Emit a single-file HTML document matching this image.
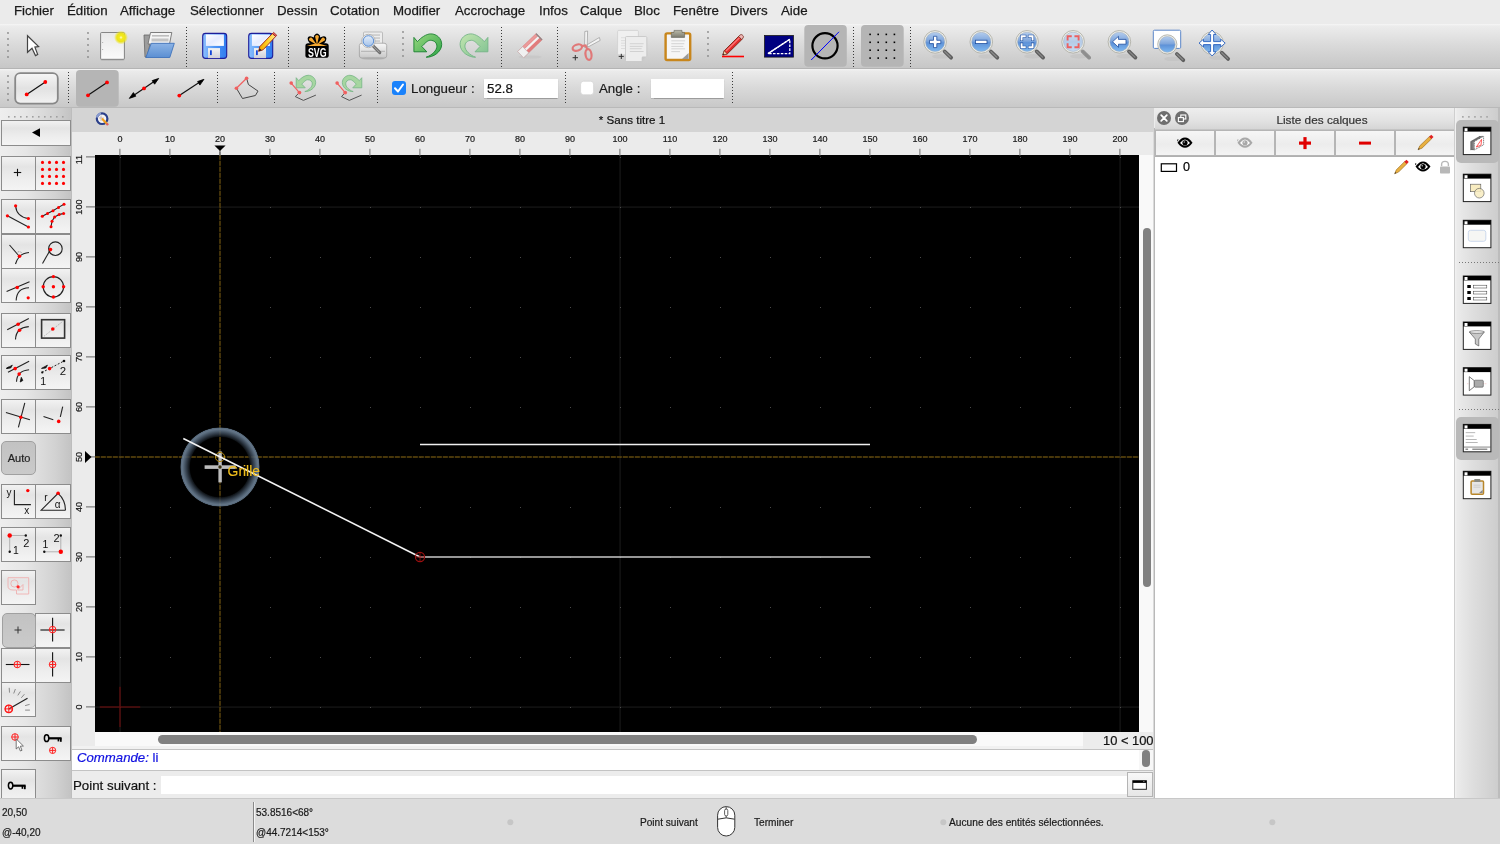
<!DOCTYPE html><html><head><meta charset="utf-8"><style>
html,body{margin:0;padding:0}
body{width:1500px;height:844px;position:relative;overflow:hidden;background:#ececec;font-family:"Liberation Sans",sans-serif}
.t{position:absolute;white-space:nowrap;line-height:normal;-webkit-text-stroke:0.2px currentColor;will-change:transform}
svg{display:block;will-change:transform}
</style></head><body>

<div style="position:absolute;left:0px;top:0px;width:1500px;height:24px;background:#ebebeb"></div>
<div class="t" style="left:13.9px;top:3.36px;font-size:13.3px;color:#1a1a1a;-webkit-text-stroke:0.25px #1a1a1a">Fichier</div>
<div class="t" style="left:66.5px;top:3.36px;font-size:13.3px;color:#1a1a1a;-webkit-text-stroke:0.25px #1a1a1a">Édition</div>
<div class="t" style="left:120.3px;top:3.36px;font-size:13.3px;color:#1a1a1a;-webkit-text-stroke:0.25px #1a1a1a">Affichage</div>
<div class="t" style="left:189.7px;top:3.36px;font-size:13.3px;color:#1a1a1a;-webkit-text-stroke:0.25px #1a1a1a">Sélectionner</div>
<div class="t" style="left:277.1px;top:3.36px;font-size:13.3px;color:#1a1a1a;-webkit-text-stroke:0.25px #1a1a1a">Dessin</div>
<div class="t" style="left:329.7px;top:3.36px;font-size:13.3px;color:#1a1a1a;-webkit-text-stroke:0.25px #1a1a1a">Cotation</div>
<div class="t" style="left:392.5px;top:3.36px;font-size:13.3px;color:#1a1a1a;-webkit-text-stroke:0.25px #1a1a1a">Modifier</div>
<div class="t" style="left:455.0px;top:3.36px;font-size:13.3px;color:#1a1a1a;-webkit-text-stroke:0.25px #1a1a1a">Accrochage</div>
<div class="t" style="left:538.6px;top:3.36px;font-size:13.3px;color:#1a1a1a;-webkit-text-stroke:0.25px #1a1a1a">Infos</div>
<div class="t" style="left:579.6px;top:3.36px;font-size:13.3px;color:#1a1a1a;-webkit-text-stroke:0.25px #1a1a1a">Calque</div>
<div class="t" style="left:633.9px;top:3.36px;font-size:13.3px;color:#1a1a1a;-webkit-text-stroke:0.25px #1a1a1a">Bloc</div>
<div class="t" style="left:672.6px;top:3.36px;font-size:13.3px;color:#1a1a1a;-webkit-text-stroke:0.25px #1a1a1a">Fenêtre</div>
<div class="t" style="left:730.4px;top:3.36px;font-size:13.3px;color:#1a1a1a;-webkit-text-stroke:0.25px #1a1a1a">Divers</div>
<div class="t" style="left:780.6px;top:3.36px;font-size:13.3px;color:#1a1a1a;-webkit-text-stroke:0.25px #1a1a1a">Aide</div>
<div style="position:absolute;left:0px;top:24px;width:1500px;height:44px;background:linear-gradient(#f6f6f6 0px,#ececec 2px,#d9d9d9 22px,#c7c7c7 43.5px);"></div>
<div style="position:absolute;left:0px;top:67.6px;width:1500px;height:1.2px;background:#b4b4b4"></div>
<div style="position:absolute;left:0px;top:68.8px;width:1500px;height:38.2px;background:linear-gradient(#f4f4f4 0px,#ebebeb 2px,#d9d9d9 19px,#c9c9c9 37.5px);"></div>
<div style="position:absolute;left:0px;top:106.7px;width:1500px;height:1.3px;background:#b9b9b9"></div>
<svg style="position:absolute;left:8px;top:33px;overflow:visible" width="1" height="25" viewBox="0 0 1 25"><circle cx="0" cy="0.00" r="0.9" fill="#8a8a8a"/><circle cx="0" cy="6.00" r="0.9" fill="#8a8a8a"/><circle cx="0" cy="12.00" r="0.9" fill="#8a8a8a"/><circle cx="0" cy="18.00" r="0.9" fill="#8a8a8a"/><circle cx="0" cy="24.00" r="0.9" fill="#8a8a8a"/></svg>
<svg style="position:absolute;left:88px;top:33px;overflow:visible" width="1" height="25" viewBox="0 0 1 25"><circle cx="0" cy="0.00" r="0.9" fill="#8a8a8a"/><circle cx="0" cy="6.00" r="0.9" fill="#8a8a8a"/><circle cx="0" cy="12.00" r="0.9" fill="#8a8a8a"/><circle cx="0" cy="18.00" r="0.9" fill="#8a8a8a"/><circle cx="0" cy="24.00" r="0.9" fill="#8a8a8a"/></svg>
<svg style="position:absolute;left:186px;top:27px;overflow:visible" width="1" height="40" viewBox="0 0 1 40"><rect x="0" y="0" width="1" height="1" fill="#3a3a3a"/><rect x="0" y="3" width="1" height="1" fill="#3a3a3a"/><rect x="0" y="6" width="1" height="1" fill="#3a3a3a"/><rect x="0" y="9" width="1" height="1" fill="#3a3a3a"/><rect x="0" y="12" width="1" height="1" fill="#3a3a3a"/><rect x="0" y="15" width="1" height="1" fill="#3a3a3a"/><rect x="0" y="18" width="1" height="1" fill="#3a3a3a"/><rect x="0" y="21" width="1" height="1" fill="#3a3a3a"/><rect x="0" y="24" width="1" height="1" fill="#3a3a3a"/><rect x="0" y="27" width="1" height="1" fill="#3a3a3a"/><rect x="0" y="30" width="1" height="1" fill="#3a3a3a"/><rect x="0" y="33" width="1" height="1" fill="#3a3a3a"/><rect x="0" y="36" width="1" height="1" fill="#3a3a3a"/><rect x="0" y="39" width="1" height="1" fill="#3a3a3a"/></svg>
<svg style="position:absolute;left:288px;top:27px;overflow:visible" width="1" height="40" viewBox="0 0 1 40"><rect x="0" y="0" width="1" height="1" fill="#3a3a3a"/><rect x="0" y="3" width="1" height="1" fill="#3a3a3a"/><rect x="0" y="6" width="1" height="1" fill="#3a3a3a"/><rect x="0" y="9" width="1" height="1" fill="#3a3a3a"/><rect x="0" y="12" width="1" height="1" fill="#3a3a3a"/><rect x="0" y="15" width="1" height="1" fill="#3a3a3a"/><rect x="0" y="18" width="1" height="1" fill="#3a3a3a"/><rect x="0" y="21" width="1" height="1" fill="#3a3a3a"/><rect x="0" y="24" width="1" height="1" fill="#3a3a3a"/><rect x="0" y="27" width="1" height="1" fill="#3a3a3a"/><rect x="0" y="30" width="1" height="1" fill="#3a3a3a"/><rect x="0" y="33" width="1" height="1" fill="#3a3a3a"/><rect x="0" y="36" width="1" height="1" fill="#3a3a3a"/><rect x="0" y="39" width="1" height="1" fill="#3a3a3a"/></svg>
<svg style="position:absolute;left:344px;top:27px;overflow:visible" width="1" height="40" viewBox="0 0 1 40"><rect x="0" y="0" width="1" height="1" fill="#3a3a3a"/><rect x="0" y="3" width="1" height="1" fill="#3a3a3a"/><rect x="0" y="6" width="1" height="1" fill="#3a3a3a"/><rect x="0" y="9" width="1" height="1" fill="#3a3a3a"/><rect x="0" y="12" width="1" height="1" fill="#3a3a3a"/><rect x="0" y="15" width="1" height="1" fill="#3a3a3a"/><rect x="0" y="18" width="1" height="1" fill="#3a3a3a"/><rect x="0" y="21" width="1" height="1" fill="#3a3a3a"/><rect x="0" y="24" width="1" height="1" fill="#3a3a3a"/><rect x="0" y="27" width="1" height="1" fill="#3a3a3a"/><rect x="0" y="30" width="1" height="1" fill="#3a3a3a"/><rect x="0" y="33" width="1" height="1" fill="#3a3a3a"/><rect x="0" y="36" width="1" height="1" fill="#3a3a3a"/><rect x="0" y="39" width="1" height="1" fill="#3a3a3a"/></svg>
<svg style="position:absolute;left:501px;top:27px;overflow:visible" width="1" height="40" viewBox="0 0 1 40"><rect x="0" y="0" width="1" height="1" fill="#3a3a3a"/><rect x="0" y="3" width="1" height="1" fill="#3a3a3a"/><rect x="0" y="6" width="1" height="1" fill="#3a3a3a"/><rect x="0" y="9" width="1" height="1" fill="#3a3a3a"/><rect x="0" y="12" width="1" height="1" fill="#3a3a3a"/><rect x="0" y="15" width="1" height="1" fill="#3a3a3a"/><rect x="0" y="18" width="1" height="1" fill="#3a3a3a"/><rect x="0" y="21" width="1" height="1" fill="#3a3a3a"/><rect x="0" y="24" width="1" height="1" fill="#3a3a3a"/><rect x="0" y="27" width="1" height="1" fill="#3a3a3a"/><rect x="0" y="30" width="1" height="1" fill="#3a3a3a"/><rect x="0" y="33" width="1" height="1" fill="#3a3a3a"/><rect x="0" y="36" width="1" height="1" fill="#3a3a3a"/><rect x="0" y="39" width="1" height="1" fill="#3a3a3a"/></svg>
<svg style="position:absolute;left:557px;top:27px;overflow:visible" width="1" height="40" viewBox="0 0 1 40"><rect x="0" y="0" width="1" height="1" fill="#3a3a3a"/><rect x="0" y="3" width="1" height="1" fill="#3a3a3a"/><rect x="0" y="6" width="1" height="1" fill="#3a3a3a"/><rect x="0" y="9" width="1" height="1" fill="#3a3a3a"/><rect x="0" y="12" width="1" height="1" fill="#3a3a3a"/><rect x="0" y="15" width="1" height="1" fill="#3a3a3a"/><rect x="0" y="18" width="1" height="1" fill="#3a3a3a"/><rect x="0" y="21" width="1" height="1" fill="#3a3a3a"/><rect x="0" y="24" width="1" height="1" fill="#3a3a3a"/><rect x="0" y="27" width="1" height="1" fill="#3a3a3a"/><rect x="0" y="30" width="1" height="1" fill="#3a3a3a"/><rect x="0" y="33" width="1" height="1" fill="#3a3a3a"/><rect x="0" y="36" width="1" height="1" fill="#3a3a3a"/><rect x="0" y="39" width="1" height="1" fill="#3a3a3a"/></svg>
<svg style="position:absolute;left:853px;top:27px;overflow:visible" width="1" height="40" viewBox="0 0 1 40"><rect x="0" y="0" width="1" height="1" fill="#3a3a3a"/><rect x="0" y="3" width="1" height="1" fill="#3a3a3a"/><rect x="0" y="6" width="1" height="1" fill="#3a3a3a"/><rect x="0" y="9" width="1" height="1" fill="#3a3a3a"/><rect x="0" y="12" width="1" height="1" fill="#3a3a3a"/><rect x="0" y="15" width="1" height="1" fill="#3a3a3a"/><rect x="0" y="18" width="1" height="1" fill="#3a3a3a"/><rect x="0" y="21" width="1" height="1" fill="#3a3a3a"/><rect x="0" y="24" width="1" height="1" fill="#3a3a3a"/><rect x="0" y="27" width="1" height="1" fill="#3a3a3a"/><rect x="0" y="30" width="1" height="1" fill="#3a3a3a"/><rect x="0" y="33" width="1" height="1" fill="#3a3a3a"/><rect x="0" y="36" width="1" height="1" fill="#3a3a3a"/><rect x="0" y="39" width="1" height="1" fill="#3a3a3a"/></svg>
<svg style="position:absolute;left:910px;top:27px;overflow:visible" width="1" height="40" viewBox="0 0 1 40"><rect x="0" y="0" width="1" height="1" fill="#3a3a3a"/><rect x="0" y="3" width="1" height="1" fill="#3a3a3a"/><rect x="0" y="6" width="1" height="1" fill="#3a3a3a"/><rect x="0" y="9" width="1" height="1" fill="#3a3a3a"/><rect x="0" y="12" width="1" height="1" fill="#3a3a3a"/><rect x="0" y="15" width="1" height="1" fill="#3a3a3a"/><rect x="0" y="18" width="1" height="1" fill="#3a3a3a"/><rect x="0" y="21" width="1" height="1" fill="#3a3a3a"/><rect x="0" y="24" width="1" height="1" fill="#3a3a3a"/><rect x="0" y="27" width="1" height="1" fill="#3a3a3a"/><rect x="0" y="30" width="1" height="1" fill="#3a3a3a"/><rect x="0" y="33" width="1" height="1" fill="#3a3a3a"/><rect x="0" y="36" width="1" height="1" fill="#3a3a3a"/><rect x="0" y="39" width="1" height="1" fill="#3a3a3a"/></svg>
<svg style="position:absolute;left:403px;top:32px;overflow:visible" width="1" height="26" viewBox="0 0 1 26"><circle cx="0" cy="0.00" r="0.9" fill="#8a8a8a"/><circle cx="0" cy="6.00" r="0.9" fill="#8a8a8a"/><circle cx="0" cy="12.00" r="0.9" fill="#8a8a8a"/><circle cx="0" cy="18.00" r="0.9" fill="#8a8a8a"/><circle cx="0" cy="24.00" r="0.9" fill="#8a8a8a"/></svg>
<svg style="position:absolute;left:708px;top:32px;overflow:visible" width="1" height="26" viewBox="0 0 1 26"><circle cx="0" cy="0.00" r="0.9" fill="#8a8a8a"/><circle cx="0" cy="6.00" r="0.9" fill="#8a8a8a"/><circle cx="0" cy="12.00" r="0.9" fill="#8a8a8a"/><circle cx="0" cy="18.00" r="0.9" fill="#8a8a8a"/><circle cx="0" cy="24.00" r="0.9" fill="#8a8a8a"/></svg>
<svg style="position:absolute;left:8px;top:76px;overflow:visible" width="1" height="25" viewBox="0 0 1 25"><circle cx="0" cy="0.00" r="0.9" fill="#8a8a8a"/><circle cx="0" cy="6.00" r="0.9" fill="#8a8a8a"/><circle cx="0" cy="12.00" r="0.9" fill="#8a8a8a"/><circle cx="0" cy="18.00" r="0.9" fill="#8a8a8a"/><circle cx="0" cy="24.00" r="0.9" fill="#8a8a8a"/></svg>
<svg style="position:absolute;left:68px;top:71.5px;overflow:visible" width="1" height="33.5" viewBox="0 0 1 33.5"><rect x="0" y="0.0" width="1" height="1" fill="#3a3a3a"/><rect x="0" y="3.0" width="1" height="1" fill="#3a3a3a"/><rect x="0" y="6.0" width="1" height="1" fill="#3a3a3a"/><rect x="0" y="9.0" width="1" height="1" fill="#3a3a3a"/><rect x="0" y="12.0" width="1" height="1" fill="#3a3a3a"/><rect x="0" y="15.0" width="1" height="1" fill="#3a3a3a"/><rect x="0" y="18.0" width="1" height="1" fill="#3a3a3a"/><rect x="0" y="21.0" width="1" height="1" fill="#3a3a3a"/><rect x="0" y="24.0" width="1" height="1" fill="#3a3a3a"/><rect x="0" y="27.0" width="1" height="1" fill="#3a3a3a"/><rect x="0" y="30.0" width="1" height="1" fill="#3a3a3a"/></svg>
<svg style="position:absolute;left:217px;top:71.5px;overflow:visible" width="1" height="33.5" viewBox="0 0 1 33.5"><rect x="0" y="0.0" width="1" height="1" fill="#3a3a3a"/><rect x="0" y="3.0" width="1" height="1" fill="#3a3a3a"/><rect x="0" y="6.0" width="1" height="1" fill="#3a3a3a"/><rect x="0" y="9.0" width="1" height="1" fill="#3a3a3a"/><rect x="0" y="12.0" width="1" height="1" fill="#3a3a3a"/><rect x="0" y="15.0" width="1" height="1" fill="#3a3a3a"/><rect x="0" y="18.0" width="1" height="1" fill="#3a3a3a"/><rect x="0" y="21.0" width="1" height="1" fill="#3a3a3a"/><rect x="0" y="24.0" width="1" height="1" fill="#3a3a3a"/><rect x="0" y="27.0" width="1" height="1" fill="#3a3a3a"/><rect x="0" y="30.0" width="1" height="1" fill="#3a3a3a"/></svg>
<svg style="position:absolute;left:274px;top:71.5px;overflow:visible" width="1" height="33.5" viewBox="0 0 1 33.5"><rect x="0" y="0.0" width="1" height="1" fill="#3a3a3a"/><rect x="0" y="3.0" width="1" height="1" fill="#3a3a3a"/><rect x="0" y="6.0" width="1" height="1" fill="#3a3a3a"/><rect x="0" y="9.0" width="1" height="1" fill="#3a3a3a"/><rect x="0" y="12.0" width="1" height="1" fill="#3a3a3a"/><rect x="0" y="15.0" width="1" height="1" fill="#3a3a3a"/><rect x="0" y="18.0" width="1" height="1" fill="#3a3a3a"/><rect x="0" y="21.0" width="1" height="1" fill="#3a3a3a"/><rect x="0" y="24.0" width="1" height="1" fill="#3a3a3a"/><rect x="0" y="27.0" width="1" height="1" fill="#3a3a3a"/><rect x="0" y="30.0" width="1" height="1" fill="#3a3a3a"/></svg>
<svg style="position:absolute;left:377px;top:71.5px;overflow:visible" width="1" height="33.5" viewBox="0 0 1 33.5"><rect x="0" y="0.0" width="1" height="1" fill="#3a3a3a"/><rect x="0" y="3.0" width="1" height="1" fill="#3a3a3a"/><rect x="0" y="6.0" width="1" height="1" fill="#3a3a3a"/><rect x="0" y="9.0" width="1" height="1" fill="#3a3a3a"/><rect x="0" y="12.0" width="1" height="1" fill="#3a3a3a"/><rect x="0" y="15.0" width="1" height="1" fill="#3a3a3a"/><rect x="0" y="18.0" width="1" height="1" fill="#3a3a3a"/><rect x="0" y="21.0" width="1" height="1" fill="#3a3a3a"/><rect x="0" y="24.0" width="1" height="1" fill="#3a3a3a"/><rect x="0" y="27.0" width="1" height="1" fill="#3a3a3a"/><rect x="0" y="30.0" width="1" height="1" fill="#3a3a3a"/></svg>
<svg style="position:absolute;left:565px;top:71.5px;overflow:visible" width="1" height="33.5" viewBox="0 0 1 33.5"><rect x="0" y="0.0" width="1" height="1" fill="#3a3a3a"/><rect x="0" y="3.0" width="1" height="1" fill="#3a3a3a"/><rect x="0" y="6.0" width="1" height="1" fill="#3a3a3a"/><rect x="0" y="9.0" width="1" height="1" fill="#3a3a3a"/><rect x="0" y="12.0" width="1" height="1" fill="#3a3a3a"/><rect x="0" y="15.0" width="1" height="1" fill="#3a3a3a"/><rect x="0" y="18.0" width="1" height="1" fill="#3a3a3a"/><rect x="0" y="21.0" width="1" height="1" fill="#3a3a3a"/><rect x="0" y="24.0" width="1" height="1" fill="#3a3a3a"/><rect x="0" y="27.0" width="1" height="1" fill="#3a3a3a"/><rect x="0" y="30.0" width="1" height="1" fill="#3a3a3a"/></svg>
<svg style="position:absolute;left:732px;top:71.5px;overflow:visible" width="1" height="33.5" viewBox="0 0 1 33.5"><rect x="0" y="0.0" width="1" height="1" fill="#3a3a3a"/><rect x="0" y="3.0" width="1" height="1" fill="#3a3a3a"/><rect x="0" y="6.0" width="1" height="1" fill="#3a3a3a"/><rect x="0" y="9.0" width="1" height="1" fill="#3a3a3a"/><rect x="0" y="12.0" width="1" height="1" fill="#3a3a3a"/><rect x="0" y="15.0" width="1" height="1" fill="#3a3a3a"/><rect x="0" y="18.0" width="1" height="1" fill="#3a3a3a"/><rect x="0" y="21.0" width="1" height="1" fill="#3a3a3a"/><rect x="0" y="24.0" width="1" height="1" fill="#3a3a3a"/><rect x="0" y="27.0" width="1" height="1" fill="#3a3a3a"/><rect x="0" y="30.0" width="1" height="1" fill="#3a3a3a"/></svg>
<div style="position:absolute;left:0px;top:108px;width:70.5px;height:690px;background:linear-gradient(90deg,#eeeeee 0px,#e6e6e6 25px,#d2d2d2 55px,#c4c4c4 70px)"></div>
<div style="position:absolute;left:70.5px;top:108px;width:1.5px;height:690px;background:#bdbdbd"></div>
<svg style="position:absolute;left:0px;top:116px;overflow:visible" width="70" height="2" viewBox="0 0 70 2"><rect x="8" y="0" width="1.6" height="1.6" fill="#a0a0a0"/><rect x="14" y="0" width="1.6" height="1.6" fill="#a0a0a0"/><rect x="20" y="0" width="1.6" height="1.6" fill="#a0a0a0"/><rect x="26" y="0" width="1.6" height="1.6" fill="#a0a0a0"/><rect x="32" y="0" width="1.6" height="1.6" fill="#a0a0a0"/><rect x="38" y="0" width="1.6" height="1.6" fill="#a0a0a0"/><rect x="44" y="0" width="1.6" height="1.6" fill="#a0a0a0"/><rect x="50" y="0" width="1.6" height="1.6" fill="#a0a0a0"/><rect x="56" y="0" width="1.6" height="1.6" fill="#a0a0a0"/><rect x="62" y="0" width="1.6" height="1.6" fill="#a0a0a0"/></svg>
<div style="position:absolute;left:1.1px;top:120.2px;width:69.8px;height:25.6px;box-sizing:border-box;border:1.3px solid #8c8c8c;background:linear-gradient(#f2f2f2 0%,#e4e4e4 30%,#ececec 60%,#f4f4f4 100%)"></div>
<svg style="position:absolute;left:1.1px;top:120.2px;overflow:visible" width="69.8" height="25.6" viewBox="0 0 69.8 25.6"><path d="M31 12.6 L39 8.2 L39 17 Z" fill="#000"/></svg>
<div style="position:absolute;left:72px;top:108px;width:1082px;height:23.5px;background:#d4d4d4"></div>
<div class="t" style="left:332.29999999999995px;width:600px;text-align:center;top:112.70px;font-size:11.6px;color:#111;">* Sans titre 1</div>
<div style="position:absolute;left:72px;top:131.5px;width:1083px;height:23.5px;background:#ebebeb"></div>
<div style="position:absolute;left:72px;top:155px;width:23px;height:591px;background:#ebebeb"></div>
<div style="position:absolute;left:94.5px;top:155px;width:0.8px;height:577px;background:#fafafa"></div>
<div style="position:absolute;left:95px;top:155px;width:1044px;height:576.7px;background:#000"></div>
<div style="position:absolute;left:1139px;top:155px;width:14px;height:577px;background:#f9f9f9"></div>
<div style="position:absolute;left:1143px;top:228px;width:8px;height:359px;background:#808080;border-radius:4px"></div>
<div style="position:absolute;left:95px;top:731.7px;width:988px;height:14.3px;background:#f9f9f9"></div>
<div style="position:absolute;left:72px;top:746px;width:1081px;height:2.5px;background:#f1f1f1"></div>
<div style="position:absolute;left:158px;top:735.2px;width:819px;height:9px;background:#808080;border-radius:4.5px"></div>
<div style="position:absolute;left:1083px;top:731.7px;width:70px;height:17px;background:#ececec"></div>
<div class="t" style="right:346.79999999999995px;top:733.33px;font-size:12.9px;color:#111;">10 &lt; 100</div>
<div style="position:absolute;left:1153px;top:131.5px;width:1.2px;height:666.5px;background:#dadada"></div>
<div style="position:absolute;left:1154.2px;top:128px;width:0.9px;height:670px;background:#b9b9b9"></div>
<div style="position:absolute;left:72px;top:748.5px;width:1081px;height:1.5px;background:#c3c3c3"></div>
<div style="position:absolute;left:72px;top:750px;width:1081px;height:20.4px;background:#fff"></div>
<div class="t" style="left:77.3px;top:749.85px;font-size:13.2px;color:#1010e0;"><i>Commande:</i> li</div>
<div style="position:absolute;left:1139px;top:750px;width:14px;height:20.4px;background:#f7f7f7"></div>
<div style="position:absolute;left:1142px;top:750.4px;width:8px;height:16.4px;background:#808080;border-radius:4px"></div>
<div style="position:absolute;left:72px;top:770.2px;width:1081px;height:1.2px;background:#c3c3c3"></div>
<div style="position:absolute;left:72px;top:771.4px;width:1081px;height:26.6px;background:#ececec"></div>
<div class="t" style="left:73.2px;top:778.36px;font-size:13.3px;color:#111;">Point suivant :</div>
<div style="position:absolute;left:161px;top:775.6px;width:966px;height:18.2px;background:#fff"></div>
<svg style="position:absolute;left:95px;top:155px;overflow:visible" width="1044" height="577" viewBox="0 0 1044 577"><rect x="24.5" y="0" width="1.2" height="577" fill="#181818"/><rect x="524.5" y="0" width="1.2" height="577" fill="#181818"/><rect x="1024.5" y="0" width="1.2" height="577" fill="#181818"/><rect x="0" y="551.5" width="1044" height="1.2" fill="#181818"/><rect x="0" y="51.5" width="1044" height="1.2" fill="#181818"/><rect x="25" y="552" width="1" height="1" fill="#4a4a4a"/><rect x="25" y="502" width="1" height="1" fill="#4a4a4a"/><rect x="25" y="452" width="1" height="1" fill="#4a4a4a"/><rect x="25" y="402" width="1" height="1" fill="#4a4a4a"/><rect x="25" y="352" width="1" height="1" fill="#4a4a4a"/><rect x="25" y="302" width="1" height="1" fill="#4a4a4a"/><rect x="25" y="252" width="1" height="1" fill="#4a4a4a"/><rect x="25" y="202" width="1" height="1" fill="#4a4a4a"/><rect x="25" y="152" width="1" height="1" fill="#4a4a4a"/><rect x="25" y="102" width="1" height="1" fill="#4a4a4a"/><rect x="25" y="52" width="1" height="1" fill="#4a4a4a"/><rect x="25" y="2" width="1" height="1" fill="#4a4a4a"/><rect x="75" y="552" width="1" height="1" fill="#4a4a4a"/><rect x="75" y="502" width="1" height="1" fill="#4a4a4a"/><rect x="75" y="452" width="1" height="1" fill="#4a4a4a"/><rect x="75" y="402" width="1" height="1" fill="#4a4a4a"/><rect x="75" y="352" width="1" height="1" fill="#4a4a4a"/><rect x="75" y="302" width="1" height="1" fill="#4a4a4a"/><rect x="75" y="252" width="1" height="1" fill="#4a4a4a"/><rect x="75" y="202" width="1" height="1" fill="#4a4a4a"/><rect x="75" y="152" width="1" height="1" fill="#4a4a4a"/><rect x="75" y="102" width="1" height="1" fill="#4a4a4a"/><rect x="75" y="52" width="1" height="1" fill="#4a4a4a"/><rect x="75" y="2" width="1" height="1" fill="#4a4a4a"/><rect x="125" y="552" width="1" height="1" fill="#4a4a4a"/><rect x="125" y="502" width="1" height="1" fill="#4a4a4a"/><rect x="125" y="452" width="1" height="1" fill="#4a4a4a"/><rect x="125" y="402" width="1" height="1" fill="#4a4a4a"/><rect x="125" y="352" width="1" height="1" fill="#4a4a4a"/><rect x="125" y="302" width="1" height="1" fill="#4a4a4a"/><rect x="125" y="252" width="1" height="1" fill="#4a4a4a"/><rect x="125" y="202" width="1" height="1" fill="#4a4a4a"/><rect x="125" y="152" width="1" height="1" fill="#4a4a4a"/><rect x="125" y="102" width="1" height="1" fill="#4a4a4a"/><rect x="125" y="52" width="1" height="1" fill="#4a4a4a"/><rect x="125" y="2" width="1" height="1" fill="#4a4a4a"/><rect x="175" y="552" width="1" height="1" fill="#4a4a4a"/><rect x="175" y="502" width="1" height="1" fill="#4a4a4a"/><rect x="175" y="452" width="1" height="1" fill="#4a4a4a"/><rect x="175" y="402" width="1" height="1" fill="#4a4a4a"/><rect x="175" y="352" width="1" height="1" fill="#4a4a4a"/><rect x="175" y="302" width="1" height="1" fill="#4a4a4a"/><rect x="175" y="252" width="1" height="1" fill="#4a4a4a"/><rect x="175" y="202" width="1" height="1" fill="#4a4a4a"/><rect x="175" y="152" width="1" height="1" fill="#4a4a4a"/><rect x="175" y="102" width="1" height="1" fill="#4a4a4a"/><rect x="175" y="52" width="1" height="1" fill="#4a4a4a"/><rect x="175" y="2" width="1" height="1" fill="#4a4a4a"/><rect x="225" y="552" width="1" height="1" fill="#4a4a4a"/><rect x="225" y="502" width="1" height="1" fill="#4a4a4a"/><rect x="225" y="452" width="1" height="1" fill="#4a4a4a"/><rect x="225" y="402" width="1" height="1" fill="#4a4a4a"/><rect x="225" y="352" width="1" height="1" fill="#4a4a4a"/><rect x="225" y="302" width="1" height="1" fill="#4a4a4a"/><rect x="225" y="252" width="1" height="1" fill="#4a4a4a"/><rect x="225" y="202" width="1" height="1" fill="#4a4a4a"/><rect x="225" y="152" width="1" height="1" fill="#4a4a4a"/><rect x="225" y="102" width="1" height="1" fill="#4a4a4a"/><rect x="225" y="52" width="1" height="1" fill="#4a4a4a"/><rect x="225" y="2" width="1" height="1" fill="#4a4a4a"/><rect x="275" y="552" width="1" height="1" fill="#4a4a4a"/><rect x="275" y="502" width="1" height="1" fill="#4a4a4a"/><rect x="275" y="452" width="1" height="1" fill="#4a4a4a"/><rect x="275" y="402" width="1" height="1" fill="#4a4a4a"/><rect x="275" y="352" width="1" height="1" fill="#4a4a4a"/><rect x="275" y="302" width="1" height="1" fill="#4a4a4a"/><rect x="275" y="252" width="1" height="1" fill="#4a4a4a"/><rect x="275" y="202" width="1" height="1" fill="#4a4a4a"/><rect x="275" y="152" width="1" height="1" fill="#4a4a4a"/><rect x="275" y="102" width="1" height="1" fill="#4a4a4a"/><rect x="275" y="52" width="1" height="1" fill="#4a4a4a"/><rect x="275" y="2" width="1" height="1" fill="#4a4a4a"/><rect x="325" y="552" width="1" height="1" fill="#4a4a4a"/><rect x="325" y="502" width="1" height="1" fill="#4a4a4a"/><rect x="325" y="452" width="1" height="1" fill="#4a4a4a"/><rect x="325" y="402" width="1" height="1" fill="#4a4a4a"/><rect x="325" y="352" width="1" height="1" fill="#4a4a4a"/><rect x="325" y="302" width="1" height="1" fill="#4a4a4a"/><rect x="325" y="252" width="1" height="1" fill="#4a4a4a"/><rect x="325" y="202" width="1" height="1" fill="#4a4a4a"/><rect x="325" y="152" width="1" height="1" fill="#4a4a4a"/><rect x="325" y="102" width="1" height="1" fill="#4a4a4a"/><rect x="325" y="52" width="1" height="1" fill="#4a4a4a"/><rect x="325" y="2" width="1" height="1" fill="#4a4a4a"/><rect x="375" y="552" width="1" height="1" fill="#4a4a4a"/><rect x="375" y="502" width="1" height="1" fill="#4a4a4a"/><rect x="375" y="452" width="1" height="1" fill="#4a4a4a"/><rect x="375" y="402" width="1" height="1" fill="#4a4a4a"/><rect x="375" y="352" width="1" height="1" fill="#4a4a4a"/><rect x="375" y="302" width="1" height="1" fill="#4a4a4a"/><rect x="375" y="252" width="1" height="1" fill="#4a4a4a"/><rect x="375" y="202" width="1" height="1" fill="#4a4a4a"/><rect x="375" y="152" width="1" height="1" fill="#4a4a4a"/><rect x="375" y="102" width="1" height="1" fill="#4a4a4a"/><rect x="375" y="52" width="1" height="1" fill="#4a4a4a"/><rect x="375" y="2" width="1" height="1" fill="#4a4a4a"/><rect x="425" y="552" width="1" height="1" fill="#4a4a4a"/><rect x="425" y="502" width="1" height="1" fill="#4a4a4a"/><rect x="425" y="452" width="1" height="1" fill="#4a4a4a"/><rect x="425" y="402" width="1" height="1" fill="#4a4a4a"/><rect x="425" y="352" width="1" height="1" fill="#4a4a4a"/><rect x="425" y="302" width="1" height="1" fill="#4a4a4a"/><rect x="425" y="252" width="1" height="1" fill="#4a4a4a"/><rect x="425" y="202" width="1" height="1" fill="#4a4a4a"/><rect x="425" y="152" width="1" height="1" fill="#4a4a4a"/><rect x="425" y="102" width="1" height="1" fill="#4a4a4a"/><rect x="425" y="52" width="1" height="1" fill="#4a4a4a"/><rect x="425" y="2" width="1" height="1" fill="#4a4a4a"/><rect x="475" y="552" width="1" height="1" fill="#4a4a4a"/><rect x="475" y="502" width="1" height="1" fill="#4a4a4a"/><rect x="475" y="452" width="1" height="1" fill="#4a4a4a"/><rect x="475" y="402" width="1" height="1" fill="#4a4a4a"/><rect x="475" y="352" width="1" height="1" fill="#4a4a4a"/><rect x="475" y="302" width="1" height="1" fill="#4a4a4a"/><rect x="475" y="252" width="1" height="1" fill="#4a4a4a"/><rect x="475" y="202" width="1" height="1" fill="#4a4a4a"/><rect x="475" y="152" width="1" height="1" fill="#4a4a4a"/><rect x="475" y="102" width="1" height="1" fill="#4a4a4a"/><rect x="475" y="52" width="1" height="1" fill="#4a4a4a"/><rect x="475" y="2" width="1" height="1" fill="#4a4a4a"/><rect x="525" y="552" width="1" height="1" fill="#4a4a4a"/><rect x="525" y="502" width="1" height="1" fill="#4a4a4a"/><rect x="525" y="452" width="1" height="1" fill="#4a4a4a"/><rect x="525" y="402" width="1" height="1" fill="#4a4a4a"/><rect x="525" y="352" width="1" height="1" fill="#4a4a4a"/><rect x="525" y="302" width="1" height="1" fill="#4a4a4a"/><rect x="525" y="252" width="1" height="1" fill="#4a4a4a"/><rect x="525" y="202" width="1" height="1" fill="#4a4a4a"/><rect x="525" y="152" width="1" height="1" fill="#4a4a4a"/><rect x="525" y="102" width="1" height="1" fill="#4a4a4a"/><rect x="525" y="52" width="1" height="1" fill="#4a4a4a"/><rect x="525" y="2" width="1" height="1" fill="#4a4a4a"/><rect x="575" y="552" width="1" height="1" fill="#4a4a4a"/><rect x="575" y="502" width="1" height="1" fill="#4a4a4a"/><rect x="575" y="452" width="1" height="1" fill="#4a4a4a"/><rect x="575" y="402" width="1" height="1" fill="#4a4a4a"/><rect x="575" y="352" width="1" height="1" fill="#4a4a4a"/><rect x="575" y="302" width="1" height="1" fill="#4a4a4a"/><rect x="575" y="252" width="1" height="1" fill="#4a4a4a"/><rect x="575" y="202" width="1" height="1" fill="#4a4a4a"/><rect x="575" y="152" width="1" height="1" fill="#4a4a4a"/><rect x="575" y="102" width="1" height="1" fill="#4a4a4a"/><rect x="575" y="52" width="1" height="1" fill="#4a4a4a"/><rect x="575" y="2" width="1" height="1" fill="#4a4a4a"/><rect x="625" y="552" width="1" height="1" fill="#4a4a4a"/><rect x="625" y="502" width="1" height="1" fill="#4a4a4a"/><rect x="625" y="452" width="1" height="1" fill="#4a4a4a"/><rect x="625" y="402" width="1" height="1" fill="#4a4a4a"/><rect x="625" y="352" width="1" height="1" fill="#4a4a4a"/><rect x="625" y="302" width="1" height="1" fill="#4a4a4a"/><rect x="625" y="252" width="1" height="1" fill="#4a4a4a"/><rect x="625" y="202" width="1" height="1" fill="#4a4a4a"/><rect x="625" y="152" width="1" height="1" fill="#4a4a4a"/><rect x="625" y="102" width="1" height="1" fill="#4a4a4a"/><rect x="625" y="52" width="1" height="1" fill="#4a4a4a"/><rect x="625" y="2" width="1" height="1" fill="#4a4a4a"/><rect x="675" y="552" width="1" height="1" fill="#4a4a4a"/><rect x="675" y="502" width="1" height="1" fill="#4a4a4a"/><rect x="675" y="452" width="1" height="1" fill="#4a4a4a"/><rect x="675" y="402" width="1" height="1" fill="#4a4a4a"/><rect x="675" y="352" width="1" height="1" fill="#4a4a4a"/><rect x="675" y="302" width="1" height="1" fill="#4a4a4a"/><rect x="675" y="252" width="1" height="1" fill="#4a4a4a"/><rect x="675" y="202" width="1" height="1" fill="#4a4a4a"/><rect x="675" y="152" width="1" height="1" fill="#4a4a4a"/><rect x="675" y="102" width="1" height="1" fill="#4a4a4a"/><rect x="675" y="52" width="1" height="1" fill="#4a4a4a"/><rect x="675" y="2" width="1" height="1" fill="#4a4a4a"/><rect x="725" y="552" width="1" height="1" fill="#4a4a4a"/><rect x="725" y="502" width="1" height="1" fill="#4a4a4a"/><rect x="725" y="452" width="1" height="1" fill="#4a4a4a"/><rect x="725" y="402" width="1" height="1" fill="#4a4a4a"/><rect x="725" y="352" width="1" height="1" fill="#4a4a4a"/><rect x="725" y="302" width="1" height="1" fill="#4a4a4a"/><rect x="725" y="252" width="1" height="1" fill="#4a4a4a"/><rect x="725" y="202" width="1" height="1" fill="#4a4a4a"/><rect x="725" y="152" width="1" height="1" fill="#4a4a4a"/><rect x="725" y="102" width="1" height="1" fill="#4a4a4a"/><rect x="725" y="52" width="1" height="1" fill="#4a4a4a"/><rect x="725" y="2" width="1" height="1" fill="#4a4a4a"/><rect x="775" y="552" width="1" height="1" fill="#4a4a4a"/><rect x="775" y="502" width="1" height="1" fill="#4a4a4a"/><rect x="775" y="452" width="1" height="1" fill="#4a4a4a"/><rect x="775" y="402" width="1" height="1" fill="#4a4a4a"/><rect x="775" y="352" width="1" height="1" fill="#4a4a4a"/><rect x="775" y="302" width="1" height="1" fill="#4a4a4a"/><rect x="775" y="252" width="1" height="1" fill="#4a4a4a"/><rect x="775" y="202" width="1" height="1" fill="#4a4a4a"/><rect x="775" y="152" width="1" height="1" fill="#4a4a4a"/><rect x="775" y="102" width="1" height="1" fill="#4a4a4a"/><rect x="775" y="52" width="1" height="1" fill="#4a4a4a"/><rect x="775" y="2" width="1" height="1" fill="#4a4a4a"/><rect x="825" y="552" width="1" height="1" fill="#4a4a4a"/><rect x="825" y="502" width="1" height="1" fill="#4a4a4a"/><rect x="825" y="452" width="1" height="1" fill="#4a4a4a"/><rect x="825" y="402" width="1" height="1" fill="#4a4a4a"/><rect x="825" y="352" width="1" height="1" fill="#4a4a4a"/><rect x="825" y="302" width="1" height="1" fill="#4a4a4a"/><rect x="825" y="252" width="1" height="1" fill="#4a4a4a"/><rect x="825" y="202" width="1" height="1" fill="#4a4a4a"/><rect x="825" y="152" width="1" height="1" fill="#4a4a4a"/><rect x="825" y="102" width="1" height="1" fill="#4a4a4a"/><rect x="825" y="52" width="1" height="1" fill="#4a4a4a"/><rect x="825" y="2" width="1" height="1" fill="#4a4a4a"/><rect x="875" y="552" width="1" height="1" fill="#4a4a4a"/><rect x="875" y="502" width="1" height="1" fill="#4a4a4a"/><rect x="875" y="452" width="1" height="1" fill="#4a4a4a"/><rect x="875" y="402" width="1" height="1" fill="#4a4a4a"/><rect x="875" y="352" width="1" height="1" fill="#4a4a4a"/><rect x="875" y="302" width="1" height="1" fill="#4a4a4a"/><rect x="875" y="252" width="1" height="1" fill="#4a4a4a"/><rect x="875" y="202" width="1" height="1" fill="#4a4a4a"/><rect x="875" y="152" width="1" height="1" fill="#4a4a4a"/><rect x="875" y="102" width="1" height="1" fill="#4a4a4a"/><rect x="875" y="52" width="1" height="1" fill="#4a4a4a"/><rect x="875" y="2" width="1" height="1" fill="#4a4a4a"/><rect x="925" y="552" width="1" height="1" fill="#4a4a4a"/><rect x="925" y="502" width="1" height="1" fill="#4a4a4a"/><rect x="925" y="452" width="1" height="1" fill="#4a4a4a"/><rect x="925" y="402" width="1" height="1" fill="#4a4a4a"/><rect x="925" y="352" width="1" height="1" fill="#4a4a4a"/><rect x="925" y="302" width="1" height="1" fill="#4a4a4a"/><rect x="925" y="252" width="1" height="1" fill="#4a4a4a"/><rect x="925" y="202" width="1" height="1" fill="#4a4a4a"/><rect x="925" y="152" width="1" height="1" fill="#4a4a4a"/><rect x="925" y="102" width="1" height="1" fill="#4a4a4a"/><rect x="925" y="52" width="1" height="1" fill="#4a4a4a"/><rect x="925" y="2" width="1" height="1" fill="#4a4a4a"/><rect x="975" y="552" width="1" height="1" fill="#4a4a4a"/><rect x="975" y="502" width="1" height="1" fill="#4a4a4a"/><rect x="975" y="452" width="1" height="1" fill="#4a4a4a"/><rect x="975" y="402" width="1" height="1" fill="#4a4a4a"/><rect x="975" y="352" width="1" height="1" fill="#4a4a4a"/><rect x="975" y="302" width="1" height="1" fill="#4a4a4a"/><rect x="975" y="252" width="1" height="1" fill="#4a4a4a"/><rect x="975" y="202" width="1" height="1" fill="#4a4a4a"/><rect x="975" y="152" width="1" height="1" fill="#4a4a4a"/><rect x="975" y="102" width="1" height="1" fill="#4a4a4a"/><rect x="975" y="52" width="1" height="1" fill="#4a4a4a"/><rect x="975" y="2" width="1" height="1" fill="#4a4a4a"/><rect x="1025" y="552" width="1" height="1" fill="#4a4a4a"/><rect x="1025" y="502" width="1" height="1" fill="#4a4a4a"/><rect x="1025" y="452" width="1" height="1" fill="#4a4a4a"/><rect x="1025" y="402" width="1" height="1" fill="#4a4a4a"/><rect x="1025" y="352" width="1" height="1" fill="#4a4a4a"/><rect x="1025" y="302" width="1" height="1" fill="#4a4a4a"/><rect x="1025" y="252" width="1" height="1" fill="#4a4a4a"/><rect x="1025" y="202" width="1" height="1" fill="#4a4a4a"/><rect x="1025" y="152" width="1" height="1" fill="#4a4a4a"/><rect x="1025" y="102" width="1" height="1" fill="#4a4a4a"/><rect x="1025" y="52" width="1" height="1" fill="#4a4a4a"/><rect x="1025" y="2" width="1" height="1" fill="#4a4a4a"/><rect x="24.4" y="531.8" width="1.2" height="40.2" fill="#640c0c"/><rect x="4.800000000000001" y="551.4" width="40.4" height="1.2" fill="#640c0c"/><line x1="125" y1="0" x2="125" y2="577" stroke="#221a06" stroke-width="1.2"/><line x1="125" y1="0" x2="125" y2="577" stroke="#5c460e" stroke-width="1.3" stroke-dasharray="4.8 1.2"/><line x1="0" y1="302" x2="1044" y2="302" stroke="#221a06" stroke-width="1.2"/><line x1="0" y1="302" x2="1044" y2="302" stroke="#5c460e" stroke-width="1.3" stroke-dasharray="4.8 1.2"/><line x1="325" y1="289.5" x2="775" y2="289.5" stroke="#f0f0f0" stroke-width="1.3"/><line x1="325" y1="402" x2="775" y2="402" stroke="#c8c8c8" stroke-width="1.6"/><defs><radialGradient id="gRing" cx="0.5" cy="0.5" r="0.5"><stop offset="0" stop-color="#000" stop-opacity="0"/><stop offset="0.74" stop-color="#000" stop-opacity="0"/><stop offset="0.77" stop-color="#141a20" stop-opacity="0.9"/><stop offset="0.84" stop-color="#3a4756" stop-opacity="0.95"/><stop offset="0.91" stop-color="#5d7083"/><stop offset="0.95" stop-color="#71859a"/><stop offset="0.985" stop-color="#62778b"/><stop offset="1" stop-color="#2a333c" stop-opacity="0.6"/></radialGradient></defs><circle cx="125" cy="312" r="39.8" fill="url(#gRing)" opacity="0.88"/><rect x="109.6" y="310.3" width="31" height="3.6" fill="#bdbdbd"/><rect x="123.4" y="296.4" width="3.4" height="31" fill="#bdbdbd"/><circle cx="125" cy="312" r="1.7" fill="#3a3010"/><circle cx="125" cy="302" r="4.6" fill="none" stroke="#b58c12" stroke-width="1"/><line x1="88.30000000000001" y1="283.5" x2="325" y2="402" stroke="#f4f4f4" stroke-width="1.6"/><circle cx="325" cy="402" r="4.6" fill="none" stroke="#a01010" stroke-width="1.1"/><line x1="320.4" y1="402" x2="329.6" y2="402" stroke="#8a0e0e" stroke-width="0.9"/><line x1="325" y1="397.4" x2="325" y2="406.6" stroke="#8a0e0e" stroke-width="0.9"/><text x="132.6" y="320.8" font-family="Liberation Sans" font-size="13.9" fill="#f0be1c" stroke="#f0be1c" stroke-width="0.15">Grille</text></svg>
<svg style="position:absolute;left:72px;top:131.5px;overflow:visible" width="1067" height="23.5" viewBox="0 0 1067 23.5"><rect x="47.4" y="16.80000000000001" width="1" height="7" fill="#707070"/><text x="48" y="9.699999999999989" font-family="Liberation Sans" font-size="9" fill="#1a1a1a" stroke="#1a1a1a" stroke-width="0.2" text-anchor="middle">0</text><rect x="97.4" y="16.80000000000001" width="1" height="7" fill="#707070"/><text x="98" y="9.699999999999989" font-family="Liberation Sans" font-size="9" fill="#1a1a1a" stroke="#1a1a1a" stroke-width="0.2" text-anchor="middle">10</text><rect x="147.4" y="16.80000000000001" width="1" height="7" fill="#707070"/><text x="148" y="9.699999999999989" font-family="Liberation Sans" font-size="9" fill="#1a1a1a" stroke="#1a1a1a" stroke-width="0.2" text-anchor="middle">20</text><rect x="197.4" y="16.80000000000001" width="1" height="7" fill="#707070"/><text x="198" y="9.699999999999989" font-family="Liberation Sans" font-size="9" fill="#1a1a1a" stroke="#1a1a1a" stroke-width="0.2" text-anchor="middle">30</text><rect x="247.4" y="16.80000000000001" width="1" height="7" fill="#707070"/><text x="248" y="9.699999999999989" font-family="Liberation Sans" font-size="9" fill="#1a1a1a" stroke="#1a1a1a" stroke-width="0.2" text-anchor="middle">40</text><rect x="297.4" y="16.80000000000001" width="1" height="7" fill="#707070"/><text x="298" y="9.699999999999989" font-family="Liberation Sans" font-size="9" fill="#1a1a1a" stroke="#1a1a1a" stroke-width="0.2" text-anchor="middle">50</text><rect x="347.4" y="16.80000000000001" width="1" height="7" fill="#707070"/><text x="348" y="9.699999999999989" font-family="Liberation Sans" font-size="9" fill="#1a1a1a" stroke="#1a1a1a" stroke-width="0.2" text-anchor="middle">60</text><rect x="397.4" y="16.80000000000001" width="1" height="7" fill="#707070"/><text x="398" y="9.699999999999989" font-family="Liberation Sans" font-size="9" fill="#1a1a1a" stroke="#1a1a1a" stroke-width="0.2" text-anchor="middle">70</text><rect x="447.4" y="16.80000000000001" width="1" height="7" fill="#707070"/><text x="448" y="9.699999999999989" font-family="Liberation Sans" font-size="9" fill="#1a1a1a" stroke="#1a1a1a" stroke-width="0.2" text-anchor="middle">80</text><rect x="497.4" y="16.80000000000001" width="1" height="7" fill="#707070"/><text x="498" y="9.699999999999989" font-family="Liberation Sans" font-size="9" fill="#1a1a1a" stroke="#1a1a1a" stroke-width="0.2" text-anchor="middle">90</text><rect x="547.4" y="16.80000000000001" width="1" height="7" fill="#707070"/><text x="548" y="9.699999999999989" font-family="Liberation Sans" font-size="9" fill="#1a1a1a" stroke="#1a1a1a" stroke-width="0.2" text-anchor="middle">100</text><rect x="597.4" y="16.80000000000001" width="1" height="7" fill="#707070"/><text x="598" y="9.699999999999989" font-family="Liberation Sans" font-size="9" fill="#1a1a1a" stroke="#1a1a1a" stroke-width="0.2" text-anchor="middle">110</text><rect x="647.4" y="16.80000000000001" width="1" height="7" fill="#707070"/><text x="648" y="9.699999999999989" font-family="Liberation Sans" font-size="9" fill="#1a1a1a" stroke="#1a1a1a" stroke-width="0.2" text-anchor="middle">120</text><rect x="697.4" y="16.80000000000001" width="1" height="7" fill="#707070"/><text x="698" y="9.699999999999989" font-family="Liberation Sans" font-size="9" fill="#1a1a1a" stroke="#1a1a1a" stroke-width="0.2" text-anchor="middle">130</text><rect x="747.4" y="16.80000000000001" width="1" height="7" fill="#707070"/><text x="748" y="9.699999999999989" font-family="Liberation Sans" font-size="9" fill="#1a1a1a" stroke="#1a1a1a" stroke-width="0.2" text-anchor="middle">140</text><rect x="797.4" y="16.80000000000001" width="1" height="7" fill="#707070"/><text x="798" y="9.699999999999989" font-family="Liberation Sans" font-size="9" fill="#1a1a1a" stroke="#1a1a1a" stroke-width="0.2" text-anchor="middle">150</text><rect x="847.4" y="16.80000000000001" width="1" height="7" fill="#707070"/><text x="848" y="9.699999999999989" font-family="Liberation Sans" font-size="9" fill="#1a1a1a" stroke="#1a1a1a" stroke-width="0.2" text-anchor="middle">160</text><rect x="897.4" y="16.80000000000001" width="1" height="7" fill="#707070"/><text x="898" y="9.699999999999989" font-family="Liberation Sans" font-size="9" fill="#1a1a1a" stroke="#1a1a1a" stroke-width="0.2" text-anchor="middle">170</text><rect x="947.4" y="16.80000000000001" width="1" height="7" fill="#707070"/><text x="948" y="9.699999999999989" font-family="Liberation Sans" font-size="9" fill="#1a1a1a" stroke="#1a1a1a" stroke-width="0.2" text-anchor="middle">180</text><rect x="997.4" y="16.80000000000001" width="1" height="7" fill="#707070"/><text x="998" y="9.699999999999989" font-family="Liberation Sans" font-size="9" fill="#1a1a1a" stroke="#1a1a1a" stroke-width="0.2" text-anchor="middle">190</text><rect x="1047.4" y="16.80000000000001" width="1" height="7" fill="#707070"/><text x="1048" y="9.699999999999989" font-family="Liberation Sans" font-size="9" fill="#1a1a1a" stroke="#1a1a1a" stroke-width="0.2" text-anchor="middle">200</text><path d="M142.4 13.5 h11.2 l-5.6 5.4 z" fill="#000"/><rect x="147.5" y="19.5" width="1" height="4" fill="#555"/></svg>
<svg style="position:absolute;left:72px;top:155px;overflow:hidden" width="23" height="577"><rect x="14" y="551.4" width="9" height="1" fill="#666"/><text transform="translate(9.5,552) rotate(-90)" font-family="Liberation Sans" font-size="9.2" fill="#1a1a1a" stroke="#1a1a1a" stroke-width="0.2" text-anchor="middle">0</text><rect x="14" y="501.4" width="9" height="1" fill="#666"/><text transform="translate(9.5,502) rotate(-90)" font-family="Liberation Sans" font-size="9.2" fill="#1a1a1a" stroke="#1a1a1a" stroke-width="0.2" text-anchor="middle">10</text><rect x="14" y="451.4" width="9" height="1" fill="#666"/><text transform="translate(9.5,452) rotate(-90)" font-family="Liberation Sans" font-size="9.2" fill="#1a1a1a" stroke="#1a1a1a" stroke-width="0.2" text-anchor="middle">20</text><rect x="14" y="401.4" width="9" height="1" fill="#666"/><text transform="translate(9.5,402) rotate(-90)" font-family="Liberation Sans" font-size="9.2" fill="#1a1a1a" stroke="#1a1a1a" stroke-width="0.2" text-anchor="middle">30</text><rect x="14" y="351.4" width="9" height="1" fill="#666"/><text transform="translate(9.5,352) rotate(-90)" font-family="Liberation Sans" font-size="9.2" fill="#1a1a1a" stroke="#1a1a1a" stroke-width="0.2" text-anchor="middle">40</text><rect x="14" y="301.4" width="9" height="1" fill="#666"/><text transform="translate(9.5,302) rotate(-90)" font-family="Liberation Sans" font-size="9.2" fill="#1a1a1a" stroke="#1a1a1a" stroke-width="0.2" text-anchor="middle">50</text><rect x="14" y="251.4" width="9" height="1" fill="#666"/><text transform="translate(9.5,252) rotate(-90)" font-family="Liberation Sans" font-size="9.2" fill="#1a1a1a" stroke="#1a1a1a" stroke-width="0.2" text-anchor="middle">60</text><rect x="14" y="201.4" width="9" height="1" fill="#666"/><text transform="translate(9.5,202) rotate(-90)" font-family="Liberation Sans" font-size="9.2" fill="#1a1a1a" stroke="#1a1a1a" stroke-width="0.2" text-anchor="middle">70</text><rect x="14" y="151.4" width="9" height="1" fill="#666"/><text transform="translate(9.5,152) rotate(-90)" font-family="Liberation Sans" font-size="9.2" fill="#1a1a1a" stroke="#1a1a1a" stroke-width="0.2" text-anchor="middle">80</text><rect x="14" y="101.4" width="9" height="1" fill="#666"/><text transform="translate(9.5,102) rotate(-90)" font-family="Liberation Sans" font-size="9.2" fill="#1a1a1a" stroke="#1a1a1a" stroke-width="0.2" text-anchor="middle">90</text><rect x="14" y="51.4" width="9" height="1" fill="#666"/><text transform="translate(9.5,52) rotate(-90)" font-family="Liberation Sans" font-size="9.2" fill="#1a1a1a" stroke="#1a1a1a" stroke-width="0.2" text-anchor="middle">100</text><rect x="14" y="1.4" width="9" height="1" fill="#666"/><text transform="translate(9.5,2) rotate(-90)" font-family="Liberation Sans" font-size="9.2" fill="#1a1a1a" stroke="#1a1a1a" stroke-width="0.2" text-anchor="middle">110</text><path d="M13 296 v12 l6.5 -6 z" fill="#000"/></svg>
<div style="position:absolute;left:1155px;top:108px;width:300px;height:20.5px;background:linear-gradient(#eeeeee,#e2e2e2 60%,#d6d6d6)"></div>
<div style="position:absolute;left:1155px;top:128.5px;width:300px;height:1.5px;background:#c4c4c4"></div>
<div class="t" style="left:1022.4000000000001px;width:600px;text-align:center;top:112.52px;font-size:11.8px;color:#333;">Liste des calques</div>
<svg style="position:absolute;left:1157px;top:111px;overflow:visible" width="14" height="14" viewBox="0 0 14 14"><circle cx="7" cy="7" r="7" fill="#6e6e6e"/><path d="M4.2 4.2 L9.8 9.8 M9.8 4.2 L4.2 9.8" stroke="#fff" stroke-width="1.8" stroke-linecap="round"/></svg>
<svg style="position:absolute;left:1175px;top:111px;overflow:visible" width="14" height="14" viewBox="0 0 14 14"><circle cx="7" cy="7" r="7" fill="#6e6e6e"/><rect x="5.8" y="4" width="5" height="4" fill="none" stroke="#fff" stroke-width="1.1"/><rect x="3.4" y="6.6" width="5" height="4" fill="#6e6e6e" stroke="#fff" stroke-width="1.1"/></svg>
<div style="position:absolute;left:1155px;top:130px;width:300px;height:26px;background:#b5b5b5"></div>
<div style="position:absolute;left:1155.8px;top:130.8px;width:58.6px;height:24.4px;background:linear-gradient(#f6f6f6,#ececec 55%,#f4f4f4)"></div>
<div style="position:absolute;left:1215.8px;top:130.8px;width:58.6px;height:24.4px;background:linear-gradient(#f6f6f6,#ececec 55%,#f4f4f4)"></div>
<div style="position:absolute;left:1275.8px;top:130.8px;width:58.6px;height:24.4px;background:linear-gradient(#f6f6f6,#ececec 55%,#f4f4f4)"></div>
<div style="position:absolute;left:1335.8px;top:130.8px;width:58.6px;height:24.4px;background:linear-gradient(#f6f6f6,#ececec 55%,#f4f4f4)"></div>
<div style="position:absolute;left:1395.8px;top:130.8px;width:58.6px;height:24.4px;background:linear-gradient(#f6f6f6,#ececec 55%,#f4f4f4)"></div>
<div style="position:absolute;left:1155px;top:155.5px;width:300px;height:1.2px;background:#b0b0b0"></div>
<div style="position:absolute;left:1155px;top:156.7px;width:299px;height:641.3px;background:#fff"></div>
<div style="position:absolute;left:1454px;top:108px;width:1px;height:690px;background:#cfcfcf"></div>
<div style="position:absolute;left:1455px;top:108px;width:45px;height:690px;background:linear-gradient(90deg,#f2f2f2 0px,#ebebeb 2px,#dedede 18px,#cdcdcd 43px)"></div>
<div style="position:absolute;left:1498.3px;top:108px;width:1.7px;height:690px;background:#bcbcbc"></div>
<svg style="position:absolute;left:1462px;top:116.3px;overflow:visible" width="40" height="2" viewBox="0 0 40 2"><rect x="0.0" y="0" width="1.7" height="1.7" fill="#a8a8a8"/><rect x="6.05" y="0" width="1.7" height="1.7" fill="#a8a8a8"/><rect x="12.1" y="0" width="1.7" height="1.7" fill="#a8a8a8"/><rect x="18.15" y="0" width="1.7" height="1.7" fill="#a8a8a8"/><rect x="24.2" y="0" width="1.7" height="1.7" fill="#a8a8a8"/></svg>
<div style="position:absolute;left:1456.3px;top:120.1px;width:42.7px;height:42.5px;background:#b9b9b9;border-radius:5px"></div>
<div style="position:absolute;left:1456px;top:417.1px;width:42.7px;height:42.7px;background:#b9b9b9;border-radius:5px"></div>
<svg style="position:absolute;left:1459px;top:261.5px;overflow:visible" width="44" height="2" viewBox="0 0 44 2"><rect x="0" y="0" width="1" height="1" fill="#777"/><rect x="3" y="0" width="1" height="1" fill="#777"/><rect x="6" y="0" width="1" height="1" fill="#777"/><rect x="9" y="0" width="1" height="1" fill="#777"/><rect x="12" y="0" width="1" height="1" fill="#777"/><rect x="15" y="0" width="1" height="1" fill="#777"/><rect x="18" y="0" width="1" height="1" fill="#777"/><rect x="21" y="0" width="1" height="1" fill="#777"/><rect x="24" y="0" width="1" height="1" fill="#777"/><rect x="27" y="0" width="1" height="1" fill="#777"/><rect x="30" y="0" width="1" height="1" fill="#777"/><rect x="33" y="0" width="1" height="1" fill="#777"/><rect x="36" y="0" width="1" height="1" fill="#777"/><rect x="39" y="0" width="1" height="1" fill="#777"/></svg>
<svg style="position:absolute;left:1459px;top:408.7px;overflow:visible" width="44" height="2" viewBox="0 0 44 2"><rect x="0" y="0" width="1" height="1" fill="#777"/><rect x="3" y="0" width="1" height="1" fill="#777"/><rect x="6" y="0" width="1" height="1" fill="#777"/><rect x="9" y="0" width="1" height="1" fill="#777"/><rect x="12" y="0" width="1" height="1" fill="#777"/><rect x="15" y="0" width="1" height="1" fill="#777"/><rect x="18" y="0" width="1" height="1" fill="#777"/><rect x="21" y="0" width="1" height="1" fill="#777"/><rect x="24" y="0" width="1" height="1" fill="#777"/><rect x="27" y="0" width="1" height="1" fill="#777"/><rect x="30" y="0" width="1" height="1" fill="#777"/><rect x="33" y="0" width="1" height="1" fill="#777"/><rect x="36" y="0" width="1" height="1" fill="#777"/><rect x="39" y="0" width="1" height="1" fill="#777"/></svg>
<svg style="position:absolute;left:0px;top:0px;overflow:visible" width="1500" height="108" viewBox="0 0 1500 108"><defs>
<linearGradient id="gPage" x1="0" y1="0" x2="0" y2="1"><stop offset="0" stop-color="#e8e8e8"/><stop offset="1" stop-color="#fbfbfb"/></linearGradient>
<radialGradient id="gGlow"><stop offset="0" stop-color="#fffbd0"/><stop offset="0.25" stop-color="#f4ea20"/><stop offset="0.6" stop-color="#ece31a"/><stop offset="1" stop-color="#ece31a" stop-opacity="0"/></radialGradient>
<linearGradient id="gFold" x1="0" y1="0" x2="0" y2="1"><stop offset="0" stop-color="#8db4e6"/><stop offset="1" stop-color="#5b8fd2"/></linearGradient>
<linearGradient id="gDisk" x1="0" y1="0" x2="1" y2="0"><stop offset="0" stop-color="#8cc0ff"/><stop offset="0.5" stop-color="#4f95f5"/><stop offset="1" stop-color="#2f7cf0"/></linearGradient>
<linearGradient id="gLabel" x1="0" y1="0" x2="1" y2="1"><stop offset="0" stop-color="#ffffff"/><stop offset="0.5" stop-color="#e6ecff"/><stop offset="1" stop-color="#ffffff"/></linearGradient>
<linearGradient id="gShut" x1="0" y1="0" x2="0" y2="1"><stop offset="0" stop-color="#f4f4f4"/><stop offset="1" stop-color="#cfcfd8"/></linearGradient>
<linearGradient id="gPen" x1="0" y1="0" x2="1" y2="0"><stop offset="0" stop-color="#f0a000"/><stop offset="0.5" stop-color="#ffd020"/><stop offset="1" stop-color="#ffe890"/></linearGradient>
<linearGradient id="gUndo" x1="0" y1="0" x2="1" y2="1"><stop offset="0" stop-color="#9ad880"/><stop offset="1" stop-color="#2ea448"/></linearGradient>
<linearGradient id="gRedo" x1="1" y1="0" x2="0" y2="1"><stop offset="0" stop-color="#c4e6b0"/><stop offset="1" stop-color="#7cc090"/></linearGradient>
<linearGradient id="gLens" x1="0" y1="0" x2="0" y2="1"><stop offset="0" stop-color="#b4cdee"/><stop offset="0.45" stop-color="#7fa6dc"/><stop offset="0.55" stop-color="#5e92d8"/><stop offset="1" stop-color="#7eb8f0"/></linearGradient>
<linearGradient id="gLensR" x1="0" y1="0" x2="0" y2="1"><stop offset="0" stop-color="#d2dff0"/><stop offset="0.5" stop-color="#b5cbe8"/><stop offset="1" stop-color="#c4daf2"/></linearGradient>
<linearGradient id="gPrinter" x1="0" y1="0" x2="0" y2="1"><stop offset="0" stop-color="#f8f8f8"/><stop offset="1" stop-color="#c8c8c8"/></linearGradient>
<linearGradient id="gPrevLens" x1="0" y1="0" x2="0" y2="1"><stop offset="0" stop-color="#e4eefa"/><stop offset="1" stop-color="#a4c2ea"/></linearGradient><linearGradient id="gClip" x1="0" y1="0" x2="0" y2="1"><stop offset="0" stop-color="#b8b8a8"/><stop offset="1" stop-color="#7c7c70"/></linearGradient>
</defs><rect x="804.3" y="25" width="42.5" height="41.8" rx="4" fill="#b5b5b5"/><rect x="861" y="25" width="42.7" height="41.8" rx="4" fill="#b5b5b5"/><path d="M27.5 35.7 L38.6 46.6 L34.9 47.1 L37.7 54.5 L35.5 55.6 L32 48.2 L27.5 52.3 Z" fill="#fff" stroke="#444" stroke-width="1.2" stroke-linejoin="miter"/><rect x="100.5" y="33" width="24" height="27.5" rx="1.5" fill="#9a9a9a" opacity="0.6"/><rect x="100.6" y="32.5" width="23.8" height="26.8" rx="1" fill="url(#gPage)" stroke="#7a7a7a" stroke-width="0.9"/><circle cx="102.7" cy="42.5" r="0.5" fill="#999"/><circle cx="102.7" cy="49.5" r="0.5" fill="#999"/><circle cx="121" cy="37.5" r="7" fill="url(#gGlow)"/><path d="M144 35 L151 35 L150 44 L147 57 L145 57 Z" fill="#9c9c9c" stroke="#666" stroke-width="0.8"/><path d="M150.5 32.5 L171.8 32.5 L169.5 44 L148 44 Z" fill="#f4f4f4" stroke="#707070" stroke-width="0.9"/><rect x="152" y="35" width="17" height="1.6" fill="#bdbdbd"/><rect x="151.5" y="38.5" width="17" height="3" fill="#c4c4c4"/><path d="M151.3 43.3 L174.3 43.3 L169.8 57.5 L145.8 57.5 Z" fill="url(#gFold)" stroke="#3f73bb" stroke-width="0.9" stroke-linejoin="round"/><rect x="202.7" y="33.4" width="24" height="25" rx="2.8" fill="url(#gDisk)" stroke="#1d1d9a" stroke-width="1.1"/><rect x="205.89999999999998" y="34.5" width="18" height="11.4" fill="url(#gLabel)"/><rect x="208.0" y="48.1" width="12" height="10" fill="url(#gShut)"/><rect x="210.0" y="50.3" width="1.8" height="4.8" fill="#1446d8"/><rect x="248.7" y="33.4" width="24" height="25" rx="2.8" fill="url(#gDisk)" stroke="#1d1d9a" stroke-width="1.1"/><rect x="251.89999999999998" y="34.5" width="18" height="11.4" fill="url(#gLabel)"/><rect x="254.0" y="48.1" width="12" height="10" fill="url(#gShut)"/><rect x="256.0" y="50.3" width="1.8" height="4.8" fill="#1446d8"/><path d="M258.6 51.3 L259.8 46.6 L272.4 33.6 L275.6 36.5 L263.1 49.8 Z" fill="url(#gPen)" stroke="#a02010" stroke-width="0.9" stroke-linejoin="round"/><path d="M272.4 33.6 L273.6 32.4 L276.8 35.3 L275.6 36.5 Z" fill="#e06060" stroke="#a02010" stroke-width="0.8"/><path d="M258.6 51.3 L259.6 48.2 L261.7 50.2 Z" fill="#222"/><path d="M305.4 46 Q305.4 43.2 308.2 43.2 L325.9 43.2 Q328.7 43.2 328.7 46 L328.7 55.2 Q328.7 57.8 325.9 57.8 L308.2 57.8 Q305.4 57.8 305.4 55.2 Z" fill="#000"/><ellipse cx="313.03" cy="41.40" rx="6.52" ry="3.6" transform="rotate(-137.8 313.03 41.40)" fill="#000"/><ellipse cx="317.00" cy="39.79" rx="6.40" ry="3.6" transform="rotate(-90.0 317.00 39.79)" fill="#000"/><ellipse cx="320.97" cy="41.40" rx="6.52" ry="3.6" transform="rotate(-42.2 320.97 41.40)" fill="#000"/><path d="M317 45 L309.32 40.61 A1.95 1.95 0 0 1 311.88 37.79 Z" fill="#f5a830"/><path d="M317 45 L315.10 36.60 A1.95 1.95 0 0 1 318.90 36.60 Z" fill="#f5a830"/><path d="M317 45 L322.12 37.79 A1.95 1.95 0 0 1 324.68 40.61 Z" fill="#f5a830"/><path d="M306.8 46.1 Q310 44.6 317 43.4 Q324 44.6 327.4 46.1 Z" fill="#f5a830"/><text x="317.2" y="56.5" font-family="Liberation Sans" font-weight="bold" font-size="13.4" fill="#fff" text-anchor="middle" textLength="18.6" lengthAdjust="spacingAndGlyphs">SVG</text><rect x="363.5" y="32" width="19" height="14" rx="1" fill="#ededed" stroke="#b0b0b0" stroke-width="0.8"/><rect x="366" y="34.3" width="14" height="1.5" fill="#c8c8c8"/><rect x="366" y="37.3" width="14" height="1.5" fill="#c8c8c8"/><rect x="366" y="40.3" width="14" height="1.5" fill="#c8c8c8"/><path d="M359.4 45.5 Q359.4 43.2 362 43.2 L384 43.2 Q386.7 43.2 386.7 45.5 L386.7 56 Q386.7 58 384 58 L362 58 Q359.4 58 359.4 56 Z" fill="url(#gPrinter)" stroke="#a0a0a0" stroke-width="0.8"/><rect x="361" y="50.8" width="24" height="1" fill="#b0b0b0"/><ellipse cx="373" cy="58.6" rx="12" ry="1.2" fill="#999" opacity="0.4"/><line x1="372.6" y1="45.4" x2="379.8" y2="52.6" stroke="#6e6e6e" stroke-width="3" stroke-linecap="round"/><line x1="373" y1="45.8" x2="379.4" y2="52.2" stroke="#a8a8a8" stroke-width="1" stroke-linecap="round"/><circle cx="368.4" cy="41" r="6.7" fill="#f4f4f2" stroke="#a8a8a8" stroke-width="0.8"/><circle cx="368.4" cy="41" r="5.3" fill="url(#gPrevLens)" stroke="#4a82d0" stroke-width="0.9"/><path d="M413.9 37.4 L413.9 51.8 L426.8 51.8 L421.8 46.5 C425 43.3 427.5 40.3 430.3 40.3 C434.5 40.3 436.9 43 436.9 46.2 C436.9 50.5 432 55.2 426.2 57.2 C433 57.5 441.7 52 441.7 44.4 C441.7 38.2 436.5 33.9 430.9 33.9 C426 33.9 421 37.8 417.4 41.6 Z" fill="url(#gUndo)" stroke="#17802e" stroke-width="0.9" stroke-linejoin="round"/><g transform="translate(901.8 0) scale(-1 1)"><path d="M413.9 37.4 L413.9 51.8 L426.8 51.8 L421.8 46.5 C425 43.3 427.5 40.3 430.3 40.3 C434.5 40.3 436.9 43 436.9 46.2 C436.9 50.5 432 55.2 426.2 57.2 C433 57.5 441.7 52 441.7 44.4 C441.7 38.2 436.5 33.9 430.9 33.9 C426 33.9 421 37.8 417.4 41.6 Z" fill="url(#gRedo)" stroke="#74b486" stroke-width="0.9" stroke-linejoin="round"/></g><ellipse cx="530" cy="57" rx="11.5" ry="1.6" fill="#c4c4c4" opacity="0.7"/><g transform="translate(520.6 54.6) rotate(-44)"><rect x="0" y="-4.3" width="26" height="8.6" rx="0.6" fill="#e27c7c" stroke="#cf6a6a" stroke-width="0.5"/><rect x="7" y="-4.3" width="19" height="2.6" fill="#eb9a9a"/><rect x="7" y="-1.2" width="18.5" height="2.3" fill="#f2f2f2"/><rect x="0" y="-4.3" width="7" height="8.6" fill="#f0f0f0" stroke="#bdbdbd" stroke-width="0.5"/><rect x="25" y="-4.3" width="1.2" height="8.6" fill="#8a8a8a"/></g><path d="M584.8 31.5 L587.6 31 L587.2 47 L584.6 47.5 Z" fill="#f4f4f4" stroke="#9a9a9a" stroke-width="0.7"/><path d="M599.4 37.5 L600.2 40.4 L588 47 L587 44.8 Z" fill="#f4f4f4" stroke="#9a9a9a" stroke-width="0.7"/><ellipse cx="577.3" cy="47.6" rx="4.8" ry="3" transform="rotate(-18 577.3 47.6)" fill="none" stroke="#e07878" stroke-width="2.2"/><ellipse cx="588.5" cy="54.5" rx="3" ry="5.4" transform="rotate(-8 588.5 54.5)" fill="none" stroke="#e07878" stroke-width="2.2"/><path d="M581.5 46.2 L585.5 45.5 L587.5 49.5" fill="none" stroke="#e07878" stroke-width="2.2"/><path d="M572.6 57.7 H578 M575.3 55 V60.4" stroke="#333" stroke-width="1"/><rect x="617.6" y="30.4" width="20.8" height="24.4" rx="1.2" fill="#f0f0f0" stroke="#cfcfcf" stroke-width="0.8"/><rect x="621" y="37.3" width="4" height="0.9" fill="#dadada"/><rect x="621" y="40.2" width="4" height="0.9" fill="#dadada"/><rect x="621" y="42.7" width="4" height="0.9" fill="#dadada"/><rect x="621" y="45.3" width="4" height="0.9" fill="#dadada"/><rect x="621" y="48" width="4" height="0.9" fill="#dadada"/><path d="M625.5 37.6 Q625.5 36.5 626.6 36.5 L645.8 36.5 Q646.8 36.5 646.8 37.6 L646.8 56.5 L641.7 61.6 L626.6 61.6 Q625.5 61.6 625.5 60.5 Z" fill="#ededed" stroke="#c4c4c4" stroke-width="0.8"/><path d="M641.7 61.6 L641.7 57.8 Q641.7 56.5 643 56.5 L646.8 56.5 Z" fill="#c8c8c8"/><rect x="629.8" y="43.3" width="13.8" height="0.9" fill="#cfcfcf"/><rect x="629.8" y="45.9" width="12.8" height="0.9" fill="#cfcfcf"/><rect x="629.8" y="48.3" width="11.8" height="0.9" fill="#cfcfcf"/><rect x="629.8" y="51" width="13.8" height="0.9" fill="#cfcfcf"/><path d="M618.7 56.4 H623.8 M621.3 53.8 V59" stroke="#333" stroke-width="1"/><rect x="665.6" y="33.4" width="24.6" height="26.6" rx="1.5" fill="#f6f6f6" stroke="#c8861c" stroke-width="2.4"/><path d="M682 59 L688.6 59 L688.6 53 Z" fill="#9a9a9a"/><rect x="671.3" y="40.4" width="13.8" height="0.9" fill="#cfcfcf"/><rect x="671.3" y="43.3" width="13" height="0.9" fill="#cfcfcf"/><rect x="671.3" y="45.9" width="12" height="0.9" fill="#cfcfcf"/><rect x="671.3" y="48.4" width="13.8" height="0.9" fill="#cfcfcf"/><rect x="671.3" y="51.2" width="8.7" height="0.9" fill="#cfcfcf"/><path d="M674 30.4 L682 30.4 L682 32.4 L684.6 32.4 L684.6 37.4 L671.3 37.4 L671.3 32.4 L674 32.4 Z" fill="url(#gClip)" stroke="#606058" stroke-width="0.6" stroke-linejoin="round"/><rect x="722" y="55.7" width="22" height="1.6" fill="#ff0000"/><path d="M722.8 55 L724.2 50.8 L738.6 36.4 L741.8 39.6 L727.2 54 Z" fill="#e42a2a" stroke="#6a1a0a" stroke-width="0.8" stroke-linejoin="round"/><path d="M725.5 50.5 L739.2 37 L740.2 38 L726.5 51.5 Z" fill="#ff8a8a" opacity="0.8"/><path d="M738.6 36.4 L740 35 Q741.2 34 742.3 35 L743 35.7 Q744 36.8 743 38 L741.8 39.6 Z" fill="#f0b8b8" stroke="#6a1a0a" stroke-width="0.7"/><path d="M722.8 55 L724.2 50.8 L727.2 54 Z" fill="#f0d8b0" stroke="#6a1a0a" stroke-width="0.5"/><path d="M722.8 55 L723.3 53.3 L724.6 54.5 Z" fill="#222"/><rect x="764.6" y="35.5" width="28.8" height="21.6" fill="#000080" stroke="#1a1a1a" stroke-width="0.8"/><path d="M768 53.6 L789.8 39.3 L789.8 53.6 Z" fill="none" stroke="#fff" stroke-width="1.3" stroke-dasharray="2.6 1.3"/><line x1="768" y1="53.6" x2="789.8" y2="39.3" stroke="#fff" stroke-width="1.3"/><circle cx="825" cy="45.8" r="12.6" fill="none" stroke="#000" stroke-width="2.2"/><line x1="811.2" y1="60" x2="839" y2="31.8" stroke="#0000ff" stroke-width="1"/><rect x="869.3" y="33.6" width="1.6" height="1.6" fill="#000"/><rect x="869.3" y="41.5" width="1.6" height="1.6" fill="#000"/><rect x="869.3" y="49.400000000000006" width="1.6" height="1.6" fill="#000"/><rect x="869.3" y="57.300000000000004" width="1.6" height="1.6" fill="#000"/><rect x="877.4" y="33.6" width="1.6" height="1.6" fill="#000"/><rect x="877.4" y="41.5" width="1.6" height="1.6" fill="#000"/><rect x="877.4" y="49.400000000000006" width="1.6" height="1.6" fill="#000"/><rect x="877.4" y="57.300000000000004" width="1.6" height="1.6" fill="#000"/><rect x="885.5" y="33.6" width="1.6" height="1.6" fill="#000"/><rect x="885.5" y="41.5" width="1.6" height="1.6" fill="#000"/><rect x="885.5" y="49.400000000000006" width="1.6" height="1.6" fill="#000"/><rect x="885.5" y="57.300000000000004" width="1.6" height="1.6" fill="#000"/><rect x="893.5999999999999" y="33.6" width="1.6" height="1.6" fill="#000"/><rect x="893.5999999999999" y="41.5" width="1.6" height="1.6" fill="#000"/><rect x="893.5999999999999" y="49.400000000000006" width="1.6" height="1.6" fill="#000"/><rect x="893.5999999999999" y="57.300000000000004" width="1.6" height="1.6" fill="#000"/><ellipse cx="941.1" cy="56.4" rx="9" ry="2.2" fill="#bdbdbd" opacity="0.5"/><line x1="944.7" y1="51.5" x2="951.1" y2="57.7" stroke="#5e5e5e" stroke-width="3.8" stroke-linecap="round"/><line x1="944.7" y1="51.5" x2="950.6" y2="57.2" stroke="#8a8a8a" stroke-width="1.2" stroke-linecap="round"/><circle cx="935.1" cy="41.9" r="11.3" fill="#eeeee8" stroke="#a8a8a0" stroke-width="0.8"/><circle cx="935.1" cy="41.9" r="9.600000000000001" fill="url(#gLens)" stroke="#9aa8b8" stroke-width="0.5"/><path d="M933.5 36.3 H936.8 V40.3 H940.8 V43.6 H936.8 V47.6 H933.5 V43.6 H929.5 V40.3 H933.5 Z" fill="#fff" stroke="#1f4fa0" stroke-width="0.8"/><ellipse cx="987.3" cy="56.4" rx="9" ry="2.2" fill="#bdbdbd" opacity="0.5"/><line x1="990.9" y1="51.5" x2="997.3" y2="57.7" stroke="#5e5e5e" stroke-width="3.8" stroke-linecap="round"/><line x1="990.9" y1="51.5" x2="996.8" y2="57.2" stroke="#8a8a8a" stroke-width="1.2" stroke-linecap="round"/><circle cx="981.3" cy="41.9" r="11.3" fill="#eeeee8" stroke="#a8a8a0" stroke-width="0.8"/><circle cx="981.3" cy="41.9" r="9.600000000000001" fill="url(#gLens)" stroke="#9aa8b8" stroke-width="0.5"/><rect x="975.4" y="40.2" width="11.6" height="3.4" fill="#fff" stroke="#1f4fa0" stroke-width="0.8"/><ellipse cx="1033.1" cy="56.3" rx="9" ry="2.2" fill="#bdbdbd" opacity="0.5"/><line x1="1036.6999999999998" y1="51.4" x2="1043.1" y2="57.599999999999994" stroke="#5e5e5e" stroke-width="3.8" stroke-linecap="round"/><line x1="1036.6999999999998" y1="51.4" x2="1042.6" y2="57.099999999999994" stroke="#8a8a8a" stroke-width="1.2" stroke-linecap="round"/><circle cx="1027.1" cy="41.8" r="11.3" fill="#eeeee8" stroke="#a8a8a0" stroke-width="0.8"/><circle cx="1027.1" cy="41.8" r="9.600000000000001" fill="url(#gLens)" stroke="#9aa8b8" stroke-width="0.5"/><path d="M1021.5999999999999 39.5 L1021.5999999999999 36.3 L1024.8 36.3" fill="none" stroke="#2050a0" stroke-width="3.0999999999999996" stroke-linecap="square"/><path d="M1021.5999999999999 44.099999999999994 L1021.5999999999999 47.3 L1024.8 47.3" fill="none" stroke="#2050a0" stroke-width="3.0999999999999996" stroke-linecap="square"/><path d="M1032.6 39.5 L1032.6 36.3 L1029.3999999999999 36.3" fill="none" stroke="#2050a0" stroke-width="3.0999999999999996" stroke-linecap="square"/><path d="M1032.6 44.099999999999994 L1032.6 47.3 L1029.3999999999999 47.3" fill="none" stroke="#2050a0" stroke-width="3.0999999999999996" stroke-linecap="square"/><path d="M1021.5999999999999 39.5 L1021.5999999999999 36.3 L1024.8 36.3" fill="none" stroke="#fff" stroke-width="1.9" stroke-linecap="square"/><path d="M1021.5999999999999 44.099999999999994 L1021.5999999999999 47.3 L1024.8 47.3" fill="none" stroke="#fff" stroke-width="1.9" stroke-linecap="square"/><path d="M1032.6 39.5 L1032.6 36.3 L1029.3999999999999 36.3" fill="none" stroke="#fff" stroke-width="1.9" stroke-linecap="square"/><path d="M1032.6 44.099999999999994 L1032.6 47.3 L1029.3999999999999 47.3" fill="none" stroke="#fff" stroke-width="1.9" stroke-linecap="square"/><ellipse cx="1079.1" cy="56.3" rx="9" ry="2.2" fill="#bdbdbd" opacity="0.5"/><line x1="1082.6999999999998" y1="51.4" x2="1089.1" y2="57.599999999999994" stroke="#5e5e5e" stroke-width="3.8" stroke-linecap="round" opacity="0.55"/><line x1="1082.6999999999998" y1="51.4" x2="1088.6" y2="57.099999999999994" stroke="#8a8a8a" stroke-width="1.2" stroke-linecap="round" opacity="0.55"/><circle cx="1073.1" cy="41.8" r="11.3" fill="#eeeee8" stroke="#a8a8a0" stroke-width="0.8"/><circle cx="1073.1" cy="41.8" r="9.600000000000001" fill="url(#gLensR)" stroke="#9aa8b8" stroke-width="0.5"/><path d="M1067.6 39.5 L1067.6 36.3 L1070.8 36.3" fill="none" stroke="#ec6060" stroke-width="1.9" stroke-linecap="square"/><path d="M1067.6 44.099999999999994 L1067.6 47.3 L1070.8 47.3" fill="none" stroke="#ec6060" stroke-width="1.9" stroke-linecap="square"/><path d="M1078.6 39.5 L1078.6 36.3 L1075.3999999999999 36.3" fill="none" stroke="#ec6060" stroke-width="1.9" stroke-linecap="square"/><path d="M1078.6 44.099999999999994 L1078.6 47.3 L1075.3999999999999 47.3" fill="none" stroke="#ec6060" stroke-width="1.9" stroke-linecap="square"/><ellipse cx="1125.4" cy="56.3" rx="9" ry="2.2" fill="#bdbdbd" opacity="0.5"/><line x1="1129.0" y1="51.4" x2="1135.4" y2="57.599999999999994" stroke="#5e5e5e" stroke-width="3.8" stroke-linecap="round"/><line x1="1129.0" y1="51.4" x2="1134.9" y2="57.099999999999994" stroke="#8a8a8a" stroke-width="1.2" stroke-linecap="round"/><circle cx="1119.4" cy="41.8" r="11.3" fill="#eeeee8" stroke="#a8a8a0" stroke-width="0.8"/><circle cx="1119.4" cy="41.8" r="9.600000000000001" fill="url(#gLens)" stroke="#9aa8b8" stroke-width="0.5"/><path d="M1112.5 41.8 L1118.5 36.3 L1118.5 39.4 L1126 39.4 L1126 44.2 L1118.5 44.2 L1118.5 47.3 Z" fill="#fff" stroke="#1f4fa0" stroke-width="0.8" stroke-linejoin="round"/><rect x="1153.3" y="30.2" width="27.4" height="18.2" rx="1.2" fill="#fff" stroke="#5a86c8" stroke-width="1"/><ellipse cx="1173.3" cy="58.9" rx="9" ry="2.2" fill="#bdbdbd" opacity="0.5"/><line x1="1176.8999999999999" y1="54.0" x2="1183.3" y2="60.2" stroke="#5e5e5e" stroke-width="3.8" stroke-linecap="round"/><line x1="1176.8999999999999" y1="54.0" x2="1182.8" y2="59.7" stroke="#8a8a8a" stroke-width="1.2" stroke-linecap="round"/><circle cx="1167.3" cy="44.4" r="9.6" fill="#eeeee8" stroke="#a8a8a0" stroke-width="0.8"/><circle cx="1167.3" cy="44.4" r="7.8999999999999995" fill="url(#gLens)" stroke="#9aa8b8" stroke-width="0.5"/><ellipse cx="1218.1" cy="57.6" rx="9" ry="2.2" fill="#bdbdbd" opacity="0.5"/><line x1="1221.6999999999998" y1="52.7" x2="1228.1" y2="58.900000000000006" stroke="#5e5e5e" stroke-width="3.8" stroke-linecap="round"/><line x1="1221.6999999999998" y1="52.7" x2="1227.6" y2="58.400000000000006" stroke="#8a8a8a" stroke-width="1.2" stroke-linecap="round"/><circle cx="1212.1" cy="43.1" r="11.3" fill="#eeeee8" stroke="#a8a8a0" stroke-width="0.8"/><circle cx="1212.1" cy="43.1" r="9.600000000000001" fill="url(#gLens)" stroke="#9aa8b8" stroke-width="0.5"/><path d="M1212.1 30 L1216 34.5 L1213.6 34.5 L1213.6 41.6 L1220.7 41.6 L1220.7 39.2 L1225.2 43.1 L1220.7 47 L1220.7 44.6 L1213.6 44.6 L1213.6 51.7 L1216 51.7 L1212.1 56 L1208.2 51.7 L1210.6 51.7 L1210.6 44.6 L1203.5 44.6 L1203.5 47 L1199 43.1 L1203.5 39.2 L1203.5 41.6 L1210.6 41.6 L1210.6 34.5 L1208.2 34.5 Z" fill="#fff" stroke="#2a62c0" stroke-width="0.9" stroke-linejoin="round"/></svg>
<svg style="position:absolute;left:0px;top:0px;overflow:visible" width="1500" height="108" viewBox="0 0 1500 108"><defs><linearGradient id="gBtn1" x1="0" y1="0" x2="0" y2="1"><stop offset="0" stop-color="#f6f6f6"/><stop offset="0.5" stop-color="#e2e2e2"/><stop offset="1" stop-color="#f2f2f2"/></linearGradient><marker id="ah" viewBox="0 0 10 10" refX="9" refY="5" markerWidth="5" markerHeight="5" orient="auto-start-reverse"><path d="M0 0 L10 5 L0 10 L2.5 5 Z" fill="#000"/></marker></defs><rect x="15.2" y="73.2" width="42.6" height="30.4" rx="5" fill="url(#gBtn1)" stroke="#888" stroke-width="1.8"/><line x1="26.7" y1="94.4" x2="45.3" y2="82" stroke="#111" stroke-width="1.2"/><circle cx="26.7" cy="94.4" r="1.9" fill="#ff0000"/><circle cx="45.3" cy="82" r="1.9" fill="#ff0000"/><rect x="76" y="70" width="42.7" height="36.7" rx="4" fill="#b5b5b5"/><line x1="88" y1="95.3" x2="107" y2="82.4" stroke="#111" stroke-width="1.2"/><circle cx="88" cy="95.3" r="1.9" fill="#ff0000"/><circle cx="107" cy="82.4" r="1.9" fill="#ff0000"/><line x1="131" y1="97.3" x2="157" y2="79.5" stroke="#111" stroke-width="1.2"/><path d="M129.3 98.4 L133.4 92.6 L135.8 96.2 Z" fill="#000" stroke="#000" stroke-width="0.8" stroke-linejoin="round"/><path d="M158.7 78.4 L154.6 84.2 L152.2 80.6 Z" fill="#000" stroke="#000" stroke-width="0.8" stroke-linejoin="round"/><circle cx="144" cy="88.4" r="1.9" fill="#ff0000"/><line x1="179.3" y1="95.6" x2="202.5" y2="80.3" stroke="#111" stroke-width="1.2"/><path d="M204 79.3 L199.9 85.1 L197.6 81.5 Z" fill="#000" stroke="#000" stroke-width="0.8" stroke-linejoin="round"/><circle cx="179.3" cy="95.6" r="1.9" fill="#ff0000"/><path d="M246.6 78.2 L248.4 84.5 L258 91.1 L255.4 95.5 L242.5 98.5 L236.4 88.2" fill="none" stroke="#444" stroke-width="1"/><line x1="236.4" y1="88.2" x2="246.6" y2="78.2" stroke="#f06060" stroke-width="1.2"/><circle cx="236.4" cy="88.2" r="1.8" fill="#f06060"/><circle cx="246.6" cy="78.2" r="1.8" fill="#f06060"/><path d="M299.4 92.6 L295.3 96.6 L303.4 100.4 L315.9 95.1" fill="none" stroke="#555" stroke-width="1"/><g transform="translate(6.48 51.55) scale(0.7)"><path d="M413.9 37.4 L413.9 51.8 L426.8 51.8 L421.8 46.5 C425 43.3 427.5 40.3 430.3 40.3 C434.5 40.3 436.9 43 436.9 46.2 C436.9 50.5 432 55.2 426.2 57.2 C433 57.5 441.7 52 441.7 44.4 C441.7 38.2 436.5 33.9 430.9 33.9 C426 33.9 421 37.8 417.4 41.6 Z" fill="#a6d6a0" stroke="#74b484" stroke-width="1.1" stroke-linejoin="round"/></g><line x1="291.2" y1="83.1" x2="299.4" y2="92.6" stroke="#f06060" stroke-width="1.2"/><circle cx="291.2" cy="83.1" r="1.8" fill="#f06060"/><circle cx="299.4" cy="92.6" r="1.9" fill="#f06060"/><path d="M345.2 92.6 L341.5 96.6 L349.3 100.4 L361.6 95.1" fill="none" stroke="#555" stroke-width="1"/><g transform="translate(651.52 51.55) scale(-0.7 0.7)"><path d="M413.9 37.4 L413.9 51.8 L426.8 51.8 L421.8 46.5 C425 43.3 427.5 40.3 430.3 40.3 C434.5 40.3 436.9 43 436.9 46.2 C436.9 50.5 432 55.2 426.2 57.2 C433 57.5 441.7 52 441.7 44.4 C441.7 38.2 436.5 33.9 430.9 33.9 C426 33.9 421 37.8 417.4 41.6 Z" fill="#a6d6a0" stroke="#74b484" stroke-width="1.1" stroke-linejoin="round"/></g><line x1="337.1" y1="83.1" x2="345.2" y2="92.6" stroke="#f06060" stroke-width="1.2"/><circle cx="337.1" cy="83.1" r="1.8" fill="#f06060"/><circle cx="345.2" cy="92.6" r="1.9" fill="#f06060"/><rect x="392" y="81" width="14" height="14" rx="3" fill="#1a82fb"/><path d="M395 88.3 L398 91.5 L403 84.5" fill="none" stroke="#fff" stroke-width="2" stroke-linecap="round" stroke-linejoin="round"/><rect x="580.6" y="81.2" width="13" height="13.6" rx="3" fill="#fff" stroke="#d4d4d4" stroke-width="0.8"/></svg>
<div class="t" style="left:411px;top:80.66px;font-size:13.3px;color:#1a1a1a;">Longueur :</div>
<div style="position:absolute;left:484.4px;top:78.7px;width:73.6px;height:19.2px;background:#fff;box-shadow:0 0.5px 1px rgba(0,0,0,0.25)"></div>
<div class="t" style="left:486.6px;top:80.96px;font-size:13.3px;color:#111;">52.8</div>
<div class="t" style="left:599px;top:80.66px;font-size:13.3px;color:#1a1a1a;">Angle :</div>
<div style="position:absolute;left:650.7px;top:78.7px;width:73.7px;height:19.2px;background:#fff;box-shadow:0 0.5px 1px rgba(0,0,0,0.25)"></div>
<div style="position:absolute;left:1.1px;top:156.2px;width:35.4px;height:35px;box-sizing:border-box;border:1.3px solid #8c8c8c;background:linear-gradient(#f2f2f2 0%,#e4e4e4 30%,#ececec 60%,#f4f4f4 100%)"></div>
<div style="position:absolute;left:35.2px;top:156.2px;width:35.7px;height:35px;box-sizing:border-box;border:1.3px solid #8c8c8c;background:linear-gradient(#f2f2f2 0%,#e4e4e4 30%,#ececec 60%,#f4f4f4 100%)"></div>
<div style="position:absolute;left:1.1px;top:199.1px;width:35.4px;height:35px;box-sizing:border-box;border:1.3px solid #8c8c8c;background:linear-gradient(#f2f2f2 0%,#e4e4e4 30%,#ececec 60%,#f4f4f4 100%)"></div>
<div style="position:absolute;left:35.2px;top:199.1px;width:35.7px;height:35px;box-sizing:border-box;border:1.3px solid #8c8c8c;background:linear-gradient(#f2f2f2 0%,#e4e4e4 30%,#ececec 60%,#f4f4f4 100%)"></div>
<div style="position:absolute;left:1.1px;top:233.6px;width:35.4px;height:35px;box-sizing:border-box;border:1.3px solid #8c8c8c;background:linear-gradient(#f2f2f2 0%,#e4e4e4 30%,#ececec 60%,#f4f4f4 100%)"></div>
<div style="position:absolute;left:35.2px;top:233.6px;width:35.7px;height:35px;box-sizing:border-box;border:1.3px solid #8c8c8c;background:linear-gradient(#f2f2f2 0%,#e4e4e4 30%,#ececec 60%,#f4f4f4 100%)"></div>
<div style="position:absolute;left:1.1px;top:268.1px;width:35.4px;height:35px;box-sizing:border-box;border:1.3px solid #8c8c8c;background:linear-gradient(#f2f2f2 0%,#e4e4e4 30%,#ececec 60%,#f4f4f4 100%)"></div>
<div style="position:absolute;left:35.2px;top:268.1px;width:35.7px;height:35px;box-sizing:border-box;border:1.3px solid #8c8c8c;background:linear-gradient(#f2f2f2 0%,#e4e4e4 30%,#ececec 60%,#f4f4f4 100%)"></div>
<div style="position:absolute;left:1.1px;top:312.6px;width:35.4px;height:35px;box-sizing:border-box;border:1.3px solid #8c8c8c;background:linear-gradient(#f2f2f2 0%,#e4e4e4 30%,#ececec 60%,#f4f4f4 100%)"></div>
<div style="position:absolute;left:35.2px;top:312.6px;width:35.7px;height:35px;box-sizing:border-box;border:1.3px solid #8c8c8c;background:linear-gradient(#f2f2f2 0%,#e4e4e4 30%,#ececec 60%,#f4f4f4 100%)"></div>
<div style="position:absolute;left:1.1px;top:355px;width:35.4px;height:35px;box-sizing:border-box;border:1.3px solid #8c8c8c;background:linear-gradient(#f2f2f2 0%,#e4e4e4 30%,#ececec 60%,#f4f4f4 100%)"></div>
<div style="position:absolute;left:35.2px;top:355px;width:35.7px;height:35px;box-sizing:border-box;border:1.3px solid #8c8c8c;background:linear-gradient(#f2f2f2 0%,#e4e4e4 30%,#ececec 60%,#f4f4f4 100%)"></div>
<div style="position:absolute;left:1.1px;top:398.6px;width:35.4px;height:35px;box-sizing:border-box;border:1.3px solid #8c8c8c;background:linear-gradient(#f2f2f2 0%,#e4e4e4 30%,#ececec 60%,#f4f4f4 100%)"></div>
<div style="position:absolute;left:35.2px;top:398.6px;width:35.7px;height:35px;box-sizing:border-box;border:1.3px solid #8c8c8c;background:linear-gradient(#f2f2f2 0%,#e4e4e4 30%,#ececec 60%,#f4f4f4 100%)"></div>
<div style="position:absolute;left:1.1px;top:484px;width:35.4px;height:35px;box-sizing:border-box;border:1.3px solid #8c8c8c;background:linear-gradient(#f2f2f2 0%,#e4e4e4 30%,#ececec 60%,#f4f4f4 100%)"></div>
<div style="position:absolute;left:35.2px;top:484px;width:35.7px;height:35px;box-sizing:border-box;border:1.3px solid #8c8c8c;background:linear-gradient(#f2f2f2 0%,#e4e4e4 30%,#ececec 60%,#f4f4f4 100%)"></div>
<div style="position:absolute;left:1.1px;top:527.3px;width:35.4px;height:35px;box-sizing:border-box;border:1.3px solid #8c8c8c;background:linear-gradient(#f2f2f2 0%,#e4e4e4 30%,#ececec 60%,#f4f4f4 100%)"></div>
<div style="position:absolute;left:35.2px;top:527.3px;width:35.7px;height:35px;box-sizing:border-box;border:1.3px solid #8c8c8c;background:linear-gradient(#f2f2f2 0%,#e4e4e4 30%,#ececec 60%,#f4f4f4 100%)"></div>
<div style="position:absolute;left:1.1px;top:570px;width:35.4px;height:35px;box-sizing:border-box;border:1.3px solid #8c8c8c;background:linear-gradient(#f2f2f2 0%,#e4e4e4 30%,#ececec 60%,#f4f4f4 100%)"></div>
<div style="position:absolute;left:35.2px;top:613px;width:35.7px;height:35px;box-sizing:border-box;border:1.3px solid #8c8c8c;background:linear-gradient(#f2f2f2 0%,#e4e4e4 30%,#ececec 60%,#f4f4f4 100%)"></div>
<div style="position:absolute;left:1.5px;top:613.4px;width:34.2px;height:34.2px;box-sizing:border-box;border:1px solid #a0a0a0;border-radius:5px;background:linear-gradient(#c2c2c2,#cacaca)"></div>
<div style="position:absolute;left:1.1px;top:647.5px;width:35.4px;height:35px;box-sizing:border-box;border:1.3px solid #8c8c8c;background:linear-gradient(#f2f2f2 0%,#e4e4e4 30%,#ececec 60%,#f4f4f4 100%)"></div>
<div style="position:absolute;left:35.2px;top:647.5px;width:35.7px;height:35px;box-sizing:border-box;border:1.3px solid #8c8c8c;background:linear-gradient(#f2f2f2 0%,#e4e4e4 30%,#ececec 60%,#f4f4f4 100%)"></div>
<div style="position:absolute;left:1.1px;top:682px;width:35.4px;height:35px;box-sizing:border-box;border:1.3px solid #8c8c8c;background:linear-gradient(#f2f2f2 0%,#e4e4e4 30%,#ececec 60%,#f4f4f4 100%)"></div>
<div style="position:absolute;left:1.1px;top:726px;width:35.4px;height:35px;box-sizing:border-box;border:1.3px solid #8c8c8c;background:linear-gradient(#f2f2f2 0%,#e4e4e4 30%,#ececec 60%,#f4f4f4 100%)"></div>
<div style="position:absolute;left:35.2px;top:726px;width:35.7px;height:35px;box-sizing:border-box;border:1.3px solid #8c8c8c;background:linear-gradient(#f2f2f2 0%,#e4e4e4 30%,#ececec 60%,#f4f4f4 100%)"></div>
<div style="position:absolute;left:1.1px;top:769.3px;width:35.4px;height:35px;box-sizing:border-box;border:1.3px solid #8c8c8c;background:linear-gradient(#f2f2f2 0%,#e4e4e4 30%,#ececec 60%,#f4f4f4 100%)"></div>
<div style="position:absolute;left:1.4px;top:441.2px;width:34.2px;height:34px;box-sizing:border-box;border:1px solid #a0a0a0;border-radius:5px;background:linear-gradient(#c2c2c2,#cacaca)"></div>
<div class="t" style="left:-281.4px;width:600px;text-align:center;top:452.35px;font-size:11px;color:#222;">Auto</div>
<svg style="position:absolute;left:0;top:0;overflow:hidden" width="72" height="798"><line x1="13.8" y1="172.5" x2="21.2" y2="172.5" stroke="#111" stroke-width="1.1" /><line x1="17.5" y1="168.8" x2="17.5" y2="176.2" stroke="#111" stroke-width="1.1" /><circle cx="42.5" cy="162.4" r="1.55" fill="#ff0000"/><circle cx="42.5" cy="169.4" r="1.55" fill="#ff0000"/><circle cx="42.5" cy="176.4" r="1.55" fill="#ff0000"/><circle cx="42.5" cy="183.4" r="1.55" fill="#ff0000"/><circle cx="49.5" cy="162.4" r="1.55" fill="#ff0000"/><circle cx="49.5" cy="169.4" r="1.55" fill="#ff0000"/><circle cx="49.5" cy="176.4" r="1.55" fill="#ff0000"/><circle cx="49.5" cy="183.4" r="1.55" fill="#ff0000"/><circle cx="56.5" cy="162.4" r="1.55" fill="#ff0000"/><circle cx="56.5" cy="169.4" r="1.55" fill="#ff0000"/><circle cx="56.5" cy="176.4" r="1.55" fill="#ff0000"/><circle cx="56.5" cy="183.4" r="1.55" fill="#ff0000"/><circle cx="63.5" cy="162.4" r="1.55" fill="#ff0000"/><circle cx="63.5" cy="169.4" r="1.55" fill="#ff0000"/><circle cx="63.5" cy="176.4" r="1.55" fill="#ff0000"/><circle cx="63.5" cy="183.4" r="1.55" fill="#ff0000"/><line x1="7.4" y1="215.8" x2="28.4" y2="227" stroke="#222" stroke-width="1.1" /><path d="M15.6 205.8 Q16.5 217 28.4 218.5" fill="none" stroke="#222" stroke-width="1.1"/><circle cx="7.4" cy="215.8" r="1.6" fill="#ff0000"/><circle cx="28.4" cy="227" r="1.6" fill="#ff0000"/><circle cx="15.6" cy="205.8" r="1.6" fill="#ff0000"/><circle cx="28.4" cy="218.5" r="1.6" fill="#ff0000"/><path d="M42.3 216.3 L47.5 213.4 L53 210.7 L58.5 207.4 L64 204.2" fill="none" stroke="#222" stroke-width="1.1"/><path d="M51 226.8 L52 221.3 L54.6 217 L59.2 214.6 L63.6 213.4" fill="none" stroke="#222" stroke-width="1.1"/><circle cx="42.3" cy="216.3" r="1.5" fill="#ff0000"/><circle cx="47.5" cy="213.4" r="1.5" fill="#ff0000"/><circle cx="53" cy="210.7" r="1.5" fill="#ff0000"/><circle cx="58.5" cy="207.4" r="1.5" fill="#ff0000"/><circle cx="64" cy="204.2" r="1.5" fill="#ff0000"/><circle cx="51" cy="226.8" r="1.5" fill="#ff0000"/><circle cx="52" cy="221.3" r="1.5" fill="#ff0000"/><circle cx="54.6" cy="217" r="1.5" fill="#ff0000"/><circle cx="59.2" cy="214.6" r="1.5" fill="#ff0000"/><circle cx="63.6" cy="213.4" r="1.5" fill="#ff0000"/><line x1="9.5" y1="245" x2="19.5" y2="256.5" stroke="#222" stroke-width="1.1" /><path d="M19.5 256.5 Q16.5 260 15.5 264" fill="none" stroke="#222" stroke-width="1.1"/><path d="M19.5 256.5 Q23 253 29 252.5" fill="none" stroke="#222" stroke-width="1.1"/><path d="M16.5 253 Q19 250.5 22 253" fill="none" stroke="#555" stroke-width="0.6" stroke-dasharray="1 0.8"/><circle cx="19.5" cy="256.3" r="1.8" fill="#ff0000"/><line x1="42.5" y1="263.6" x2="50.5" y2="249.6" stroke="#222" stroke-width="1.1" /><circle cx="55.4" cy="248.7" r="6.8" fill="none" stroke="#222" stroke-width="1.1"/><circle cx="50.5" cy="249.6" r="1.8" fill="#ff0000"/><line x1="6.6" y1="291.5" x2="29.5" y2="281.8" stroke="#222" stroke-width="1.1" /><path d="M16.2 300.6 Q16.5 288 29 287.7" fill="none" stroke="#222" stroke-width="1.1"/><circle cx="17.2" cy="287.5" r="1.8" fill="#ff0000"/><circle cx="28.2" cy="297.8" r="1.6" fill="#ff0000"/><circle cx="53.4" cy="286.8" r="10.2" fill="none" stroke="#222" stroke-width="1.1"/><circle cx="53.4" cy="286.8" r="1.7" fill="#ff0000"/><circle cx="53.4" cy="276.6" r="1.7" fill="#ff0000"/><circle cx="53.4" cy="297" r="1.7" fill="#ff0000"/><circle cx="43.2" cy="286.8" r="1.7" fill="#ff0000"/><circle cx="63.6" cy="286.8" r="1.7" fill="#ff0000"/><line x1="7.2" y1="329.8" x2="28.8" y2="318.6" stroke="#222" stroke-width="1.1" /><path d="M15.5 339.4 Q16 327.5 28.8 326.6" fill="none" stroke="#222" stroke-width="1.1"/><circle cx="18.1" cy="324.2" r="1.8" fill="#ff0000"/><circle cx="19.5" cy="330.3" r="1.8" fill="#ff0000"/><rect x="41.6" y="319.7" width="23" height="18.4" fill="none" stroke="#333" stroke-width="1.6"/><line x1="44.1" y1="336.2" x2="63.2" y2="321" stroke="#888" stroke-width="0.6" stroke-dasharray="1.2 1"/><circle cx="52.8" cy="329" r="1.8" fill="#ff0000"/><line x1="8" y1="372.2" x2="29.1" y2="361.3" stroke="#222" stroke-width="1.1" /><path d="M16.5 381.8 Q17 370.8 29.1 369.8" fill="none" stroke="#222" stroke-width="1.1"/><path d="M6.4 368.4 L12.3 365.2 L10.7 368 Z" fill="#111" stroke="#111" stroke-width="0.8"/><line x1="6.6" y1="368.5" x2="9" y2="367.2" stroke="#111" stroke-width="1.4" /><path d="M20.2 382 L21.3 377.3 L22.8 380.5 Z" fill="#111" stroke="#111" stroke-width="0.8"/><circle cx="15.2" cy="368.6" r="1.8" fill="#ff0000"/><circle cx="19.2" cy="374.1" r="1.8" fill="#ff0000"/><line x1="41.8" y1="372.6" x2="64" y2="361" stroke="#222" stroke-width="1" stroke-dasharray="2 1.6"/><path d="M41.5 368.4 L47.4 365.2 L45.8 368 Z" fill="#111" stroke="#111" stroke-width="0.8"/><circle cx="42.3" cy="372.4" r="1.1" fill="#111"/><circle cx="64" cy="361" r="1.3" fill="#111"/><circle cx="49.6" cy="368.6" r="1.8" fill="#ff0000"/><text x="40.2" y="384.6" font-family="Liberation Sans" font-size="10.6" fill="#111">1</text><text x="59.8" y="374.9" font-family="Liberation Sans" font-size="11.4" fill="#111">2</text><line x1="5.9" y1="412.5" x2="29.9" y2="419.8" stroke="#222" stroke-width="1.1" /><line x1="24.8" y1="402.9" x2="18.4" y2="427.3" stroke="#222" stroke-width="1.1" /><circle cx="20.8" cy="417.3" r="1.8" fill="#ff0000"/><line x1="43.5" y1="416.5" x2="53.3" y2="419.7" stroke="#222" stroke-width="1.1" /><line x1="62.7" y1="406.6" x2="60.3" y2="417" stroke="#222" stroke-width="1.1" /><circle cx="58.7" cy="421.4" r="1.8" fill="#ff0000"/><path d="M14.4 490 V504.6 H30.9" fill="none" stroke="#222" stroke-width="1.1"/><text x="6.6" y="496" font-family="Liberation Sans" font-size="10" fill="#111">y</text><text x="24.2" y="513.6" font-family="Liberation Sans" font-size="10" fill="#111">x</text><circle cx="27.8" cy="490.6" r="1.7" fill="#ff0000"/><path d="M65.5 510.2 H41.2 L58.1 493.3 Q65.5 500 65.5 510.2" fill="none" stroke="#222" stroke-width="1.1"/><text x="44.2" y="501.2" font-family="Liberation Sans" font-size="10" fill="#111">r</text><text x="54.8" y="507.5" font-family="Liberation Sans" font-size="10" fill="#111">α</text><circle cx="58.1" cy="493.3" r="1.8" fill="#ff0000"/><path d="M25.8 535.5 H9.7 V551.8" fill="none" stroke="#999" stroke-width="0.7"/><circle cx="9.7" cy="535.5" r="2.2" fill="#ff0000"/><circle cx="25.8" cy="535.5" r="1.2" fill="#111"/><circle cx="9.7" cy="551.8" r="1.2" fill="#111"/><text x="23.3" y="546.6" font-family="Liberation Sans" font-size="11" fill="#111">2</text><text x="13" y="554.4" font-family="Liberation Sans" font-size="10.4" fill="#111">1</text><path d="M44.3 551.8 H60.8 V535.5" fill="none" stroke="#999" stroke-width="0.7"/><circle cx="60.8" cy="551.8" r="2.2" fill="#ff0000"/><circle cx="60.8" cy="535.5" r="1.2" fill="#111"/><circle cx="44.3" cy="551.8" r="1.2" fill="#111"/><text x="42.6" y="548.4" font-family="Liberation Sans" font-size="10.4" fill="#111">1</text><text x="53.6" y="542.2" font-family="Liberation Sans" font-size="11" fill="#111">2</text><path d="M8 577.7 H28.7 V594 H16.5 V590 H13 Q8 590 8 586 Z" fill="none" stroke="#f0a8a8" stroke-width="0.8"/><circle cx="14.4" cy="583.5" r="3.6" fill="none" stroke="#f0a8a8" stroke-width="0.8"/><path d="M17.5 590 L23 584.5 V590 Z" fill="none" stroke="#f0a8a8" stroke-width="0.8"/><circle cx="18.1" cy="586.8" r="1.6" fill="#ff2a2a"/><line x1="14.5" y1="630" x2="21.5" y2="630" stroke="#333" stroke-width="1" /><line x1="18" y1="626.5" x2="18" y2="633.5" stroke="#333" stroke-width="1" /><line x1="40.4" y1="630" x2="64.6" y2="630" stroke="#111" stroke-width="1.1" /><line x1="52.6" y1="617.7" x2="52.6" y2="641.5" stroke="#111" stroke-width="1.1" /><circle cx="52.6" cy="629.6" r="3.3" fill="none" stroke="#ff2020" stroke-width="1"/><line x1="49.300000000000004" y1="629.6" x2="55.9" y2="629.6" stroke="#ff2020" stroke-width="1" /><line x1="52.6" y1="626.3000000000001" x2="52.6" y2="632.9" stroke="#ff2020" stroke-width="1" /><line x1="5.8" y1="664.5" x2="29.5" y2="664.5" stroke="#111" stroke-width="1.1" /><circle cx="17.3" cy="664.5" r="3.3" fill="none" stroke="#ff2020" stroke-width="1"/><line x1="14.0" y1="664.5" x2="20.6" y2="664.5" stroke="#ff2020" stroke-width="1" /><line x1="17.3" y1="661.2" x2="17.3" y2="667.8" stroke="#ff2020" stroke-width="1" /><line x1="52.6" y1="652.3" x2="52.6" y2="676.5" stroke="#111" stroke-width="1.1" /><circle cx="52.6" cy="664.5" r="3.3" fill="none" stroke="#ff2020" stroke-width="1"/><line x1="49.300000000000004" y1="664.5" x2="55.9" y2="664.5" stroke="#ff2020" stroke-width="1" /><line x1="52.6" y1="661.2" x2="52.6" y2="667.8" stroke="#ff2020" stroke-width="1" /><line x1="8.8" y1="708.9" x2="27.5" y2="698.2" stroke="#222" stroke-width="1.2" /><circle cx="8.8" cy="708.9" r="3.7" fill="none" stroke="#ff1a1a" stroke-width="1"/><line x1="5.1000000000000005" y1="708.9" x2="12.5" y2="708.9" stroke="#ff1a1a" stroke-width="1" /><line x1="8.8" y1="705.1999999999999" x2="8.8" y2="712.6" stroke="#ff1a1a" stroke-width="1" /><circle cx="8.8" cy="708.9" r="3.7" fill="none" stroke="#ff1a1a" stroke-width="1.3"/><line x1="9.2" y1="687.8" x2="9.5" y2="692.6" stroke="#8a8a8a" stroke-width="1" /><line x1="15.4" y1="689" x2="13.7" y2="693.5" stroke="#8a8a8a" stroke-width="1" /><line x1="20.4" y1="691.4" x2="17.8" y2="695.4" stroke="#8a8a8a" stroke-width="1" /><line x1="24.4" y1="694.2" x2="21.3" y2="697.8" stroke="#8a8a8a" stroke-width="1" /><line x1="29.6" y1="704.4" x2="25.1" y2="705.6" stroke="#8a8a8a" stroke-width="1" /><line x1="29.9" y1="710.1" x2="25.1" y2="710.1" stroke="#8a8a8a" stroke-width="1" /><circle cx="15" cy="737" r="3.3" fill="none" stroke="#ff2020" stroke-width="1"/><line x1="11.7" y1="737" x2="18.3" y2="737" stroke="#ff2020" stroke-width="1" /><line x1="15" y1="733.7" x2="15" y2="740.3" stroke="#ff2020" stroke-width="1" /><path d="M16.2 738.9 L16.2 749 L18.6 746.8 L20.4 751 L22 750.3 L20.3 746.2 L23.4 746 Z" fill="#fff" stroke="#555" stroke-width="0.8" stroke-linejoin="round"/><ellipse cx="46.599999999999994" cy="738.2" rx="2.2" ry="3.4" fill="none" stroke="#000" stroke-width="1.5"/><rect x="48.599999999999994" y="737.2" width="13.0" height="2.2" fill="#000"/><rect x="57.599999999999994" y="738.2" width="1.6" height="3.2" fill="#000"/><rect x="59.9" y="738.2" width="1.8" height="3.6" fill="#000"/><circle cx="52.6" cy="750.4" r="3.1" fill="none" stroke="#ff2020" stroke-width="1"/><line x1="49.5" y1="750.4" x2="55.7" y2="750.4" stroke="#ff2020" stroke-width="1" /><line x1="52.6" y1="747.3" x2="52.6" y2="753.5" stroke="#ff2020" stroke-width="1" /><ellipse cx="10.600000000000001" cy="785.6" rx="2.2" ry="3.4" fill="none" stroke="#000" stroke-width="1.5"/><rect x="12.600000000000001" y="784.6" width="13.0" height="2.2" fill="#000"/><rect x="21.6" y="785.6" width="1.6" height="3.2" fill="#000"/><rect x="23.9" y="785.6" width="1.8" height="3.6" fill="#000"/></svg>
<svg style="position:absolute;left:0px;top:0px;overflow:visible" width="1500" height="200" viewBox="0 0 1500 200"><g transform="translate(1185 142.8) scale(1.0)"><path d="M-7.5 0 Q-4 -5.2 0 -5.2 Q4 -5.2 7.5 0 Q4 5 0 5 Q-4 5 -7.5 0 Z" fill="#000"/><path d="M-5 0.3 Q-2.5 -3.3 0 -3.3 Q2.5 -3.3 5 0.3 Q2.5 3 0 3 Q-2.5 3 -5 0.3 Z" fill="#fff"/><circle cx="0" cy="0" r="2.6" fill="#000"/><circle cx="-0.8" cy="-0.8" r="0.7" fill="#fff" opacity="0.8"/><path d="M-7.2 -1.5 Q-8 -3 -6.8 -3.6" fill="none" stroke="#000" stroke-width="0.8"/></g><g transform="translate(1245 142.8) scale(1.0)"><path d="M-7.5 0 Q-4 -5.2 0 -5.2 Q4 -5.2 7.5 0 Q4 5 0 5 Q-4 5 -7.5 0 Z" fill="#a8a8a8"/><path d="M-5 0.3 Q-2.5 -3.3 0 -3.3 Q2.5 -3.3 5 0.3 Q2.5 3 0 3 Q-2.5 3 -5 0.3 Z" fill="#fff"/><circle cx="0" cy="0" r="2.6" fill="#a8a8a8"/><circle cx="-0.8" cy="-0.8" r="0.7" fill="#fff" opacity="0.8"/><path d="M-7.2 -1.5 Q-8 -3 -6.8 -3.6" fill="none" stroke="#a8a8a8" stroke-width="0.8"/></g><rect x="1299" y="141.5" width="12" height="3.2" fill="#e00000"/><rect x="1303.4" y="137.1" width="3.2" height="12" fill="#e00000"/><rect x="1359" y="141.6" width="12" height="3" fill="#e00000"/><g transform="translate(1418 149.8) rotate(-44.193070544897445)"><path d="M0 0 L4 -1.6 L17.583824337013173 -1.6 L17.583824337013173 1.6 L4 1.6 Z" fill="#e8b040" stroke="#8a5a10" stroke-width="0.5"/><rect x="17.083824337013173" y="-1.6" width="3" height="3.2" fill="#e02020"/><path d="M0 0 L1.8 -0.7 L1.8 0.7 Z" fill="#333"/></g><rect x="1161.3" y="163.8" width="15.2" height="7.6" fill="none" stroke="#000" stroke-width="1.2"/><g transform="translate(1394.6 173.8) rotate(-45.0)"><path d="M0 0 L4 -1.6 L15.884776310850235 -1.6 L15.884776310850235 1.6 L4 1.6 Z" fill="#e8b040" stroke="#8a5a10" stroke-width="0.5"/><rect x="15.384776310850235" y="-1.6" width="3" height="3.2" fill="#e02020"/><path d="M0 0 L1.8 -0.7 L1.8 0.7 Z" fill="#333"/></g><g transform="translate(1423 166.6) scale(1.0)"><path d="M-7.5 0 Q-4 -5.2 0 -5.2 Q4 -5.2 7.5 0 Q4 5 0 5 Q-4 5 -7.5 0 Z" fill="#000"/><path d="M-5 0.3 Q-2.5 -3.3 0 -3.3 Q2.5 -3.3 5 0.3 Q2.5 3 0 3 Q-2.5 3 -5 0.3 Z" fill="#fff"/><circle cx="0" cy="0" r="2.6" fill="#000"/><circle cx="-0.8" cy="-0.8" r="0.7" fill="#fff" opacity="0.8"/><path d="M-7.2 -1.5 Q-8 -3 -6.8 -3.6" fill="none" stroke="#000" stroke-width="0.8"/></g><path d="M1441.6 166 V164.5 Q1441.6 161.4 1445 161.4 Q1448.4 161.4 1448.4 164.5 V166" fill="none" stroke="#b8b8b8" stroke-width="1.4"/><rect x="1440" y="166.4" width="10" height="7.2" rx="0.8" fill="#b8b8b8"/></svg>
<div class="t" style="left:1182.8px;top:160.20px;font-size:12.6px;color:#000;">0</div>
<svg style="position:absolute;left:0px;top:0px;overflow:visible" width="1500" height="520" viewBox="0 0 1500 520"><rect x="1463.3" y="127.2" width="27.6" height="27.4" fill="#fff" stroke="#222" stroke-width="1"/><rect x="1463.3" y="127.2" width="27.6" height="4.4" fill="#000"/><rect x="1464.5" y="128.2" width="3" height="3" fill="#fff"/><path d="M1470.7 141.5 L1480.0 136.2 L1480.0 144.8 L1470.7 150 Z" fill="#8a8a8a" stroke="#444" stroke-width="0.5"/><path d="M1471.8999999999999 141.5 L1481.1999999999998 136.2 L1481.1999999999998 144.8 L1471.8999999999999 150 Z" fill="#a0a0a0" stroke="#444" stroke-width="0.5"/><path d="M1473.1 141.5 L1482.3999999999999 136.2 L1482.3999999999999 144.8 L1473.1 150 Z" fill="#b8b8b8" stroke="#444" stroke-width="0.5"/><path d="M1474.3 141.5 L1483.6 136.2 L1483.6 144.8 L1474.3 150 Z" fill="#fff" stroke="#333" stroke-width="0.6" stroke-dasharray="1.2 0.6"/><path d="M1476.3 147 L1481.6 139.3 L1481 145.2 Z" fill="none" stroke="#ff4a4a" stroke-width="0.9"/><rect x="1463.3" y="174.2" width="27.6" height="27.4" fill="#fff" stroke="#222" stroke-width="1"/><rect x="1463.3" y="174.2" width="27.6" height="4.4" fill="#000"/><rect x="1464.5" y="175.2" width="3" height="3" fill="#fff"/><rect x="1470.3" y="184.2" width="10.5" height="7.5" fill="#f8ecc0" stroke="#555" stroke-width="0.6"/><circle cx="1479.3" cy="193.2" r="4.8" fill="#f8ecc0" fill-opacity="0.85" stroke="#555" stroke-width="0.6"/><rect x="1463.3" y="220.3" width="27.6" height="27.4" fill="#fff" stroke="#222" stroke-width="1"/><rect x="1463.3" y="220.3" width="27.6" height="4.4" fill="#000"/><rect x="1464.5" y="221.3" width="3" height="3" fill="#fff"/><rect x="1468.3" y="230.3" width="17.5" height="11" rx="2.2" fill="#f6f6f4" stroke="#c0d0ea" stroke-width="0.8"/><rect x="1463.3" y="276" width="27.6" height="27.4" fill="#fff" stroke="#222" stroke-width="1"/><rect x="1463.3" y="276" width="27.6" height="4.4" fill="#000"/><rect x="1464.5" y="277" width="3" height="3" fill="#fff"/><rect x="1467.3" y="285" width="3.5" height="3" fill="#000"/><rect x="1473.3" y="285.2" width="13.5" height="2.8" fill="#fff" stroke="#333" stroke-width="0.5"/><rect x="1467.3" y="291" width="3.5" height="3" fill="#000"/><rect x="1473.3" y="291.2" width="13.5" height="2.8" fill="#fff" stroke="#333" stroke-width="0.5"/><rect x="1467.3" y="297" width="3.5" height="3" fill="#000"/><rect x="1473.3" y="297.2" width="13.5" height="2.8" fill="#fff" stroke="#333" stroke-width="0.5"/><rect x="1463.3" y="322" width="27.6" height="27.4" fill="#fff" stroke="#222" stroke-width="1"/><rect x="1463.3" y="322" width="27.6" height="4.4" fill="#000"/><rect x="1464.5" y="323" width="3" height="3" fill="#fff"/><path d="M1469.3 332 L1484.3 332 L1478.8 339 L1478.8 346 L1475.3 344 L1475.3 339 Z" fill="#c8c8c8" stroke="#444" stroke-width="0.6"/><ellipse cx="1476.8" cy="332" rx="7.5" ry="1.4" fill="#e8e8e8" stroke="#444" stroke-width="0.5"/><rect x="1463.3" y="367.7" width="27.6" height="27.4" fill="#fff" stroke="#222" stroke-width="1"/><rect x="1463.3" y="367.7" width="27.6" height="4.4" fill="#000"/><rect x="1464.5" y="368.7" width="3" height="3" fill="#fff"/><line x1="1467.3" y1="383.7" x2="1487.3" y2="383.7" stroke="#f0a0a0" stroke-width="0.6" stroke-dasharray="1 1"/><path d="M1469.3 376.7 L1474.3 380.7 L1474.3 386.7 L1469.3 390.7 Z" fill="#fff" stroke="#444" stroke-width="0.7"/><rect x="1474.3" y="380.2" width="9" height="7" rx="1" fill="#aaa" stroke="#555" stroke-width="0.6"/><rect x="1463.3" y="424.4" width="27.6" height="27.4" fill="#fff" stroke="#222" stroke-width="1"/><rect x="1463.3" y="424.4" width="27.6" height="4.4" fill="#000"/><rect x="1464.5" y="425.4" width="3" height="3" fill="#fff"/><rect x="1465.7" y="432.4" width="9.5" height="0.7" fill="#9a9a9a"/><rect x="1465.7" y="435.7" width="8" height="0.7" fill="#9a9a9a"/><rect x="1465.7" y="439.0" width="11" height="0.7" fill="#9a9a9a"/><rect x="1465.7" y="442.29999999999995" width="12" height="0.7" fill="#9a9a9a"/><rect x="1463.3" y="446.7" width="27.6" height="0.7" fill="#555"/><rect x="1472.3" y="448.59999999999997" width="15" height="1.2" fill="#777"/><rect x="1465.5" y="448.59999999999997" width="2.6" height="1.2" fill="#777"/><rect x="1463.3" y="471.3" width="27.6" height="27.4" fill="#fff" stroke="#222" stroke-width="1"/><rect x="1463.3" y="471.3" width="27.6" height="4.4" fill="#000"/><rect x="1464.5" y="472.3" width="3" height="3" fill="#fff"/><rect x="1471.1" y="480.90000000000003" width="12.4" height="13.4" rx="1" fill="#e6e6e6" stroke="#b8862a" stroke-width="1.5"/><rect x="1474.3" y="478.90000000000003" width="6" height="3.2" rx="0.6" fill="#8a8a82"/><rect x="1473.5" y="484.8" width="7" height="0.6" fill="#bbb"/><rect x="1473.5" y="486.8" width="7" height="0.6" fill="#bbb"/><path d="M1479.1 493.1 L1482.7 493.1 L1482.7 489.8 Z" fill="#888"/></svg>
<svg style="position:absolute;left:0px;top:0px;overflow:visible" width="200" height="140" viewBox="0 0 200 140"><circle cx="102.1" cy="118.7" r="5.3" fill="#f4f4f4" stroke="#2a3f8a" stroke-width="2.2"/><path d="M96.8 117.5 A5.3 5.3 0 0 1 101 113.5" fill="none" stroke="#8a9cd0" stroke-width="2.2"/><line x1="99" y1="118" x2="104" y2="118" stroke="#c08080" stroke-width="0.5"/><line x1="101" y1="115.5" x2="101" y2="121" stroke="#888" stroke-width="0.5"/><line x1="102.6" y1="119.2" x2="106.6" y2="123.4" stroke="#f0a020" stroke-width="2.2" stroke-linecap="round"/><circle cx="107.3" cy="124.2" r="1.2" fill="#e06060"/></svg>
<div style="position:absolute;left:1127.4px;top:772.4px;width:25.6px;height:24.8px;box-sizing:border-box;border:1px solid #b4b4b4;background:linear-gradient(#f8f8f8,#e6e6e6)"></div>
<svg style="position:absolute;left:1127.4px;top:772.4px;overflow:visible" width="26" height="25" viewBox="0 0 26 25"><rect x="5.8" y="8.7" width="13.6" height="8.6" fill="#fff" stroke="#222" stroke-width="1"/><rect x="5.8" y="8.7" width="13.6" height="2.2" fill="#000"/><rect x="16.5" y="9.2" width="0.8" height="0.8" fill="#fff"/></svg>
<div style="position:absolute;left:0px;top:797.7px;width:1500px;height:46.3px;background:#dcdcdc"></div>
<div style="position:absolute;left:0px;top:797.7px;width:1500px;height:0.8px;background:#c8c8c8"></div>
<div class="t" style="left:2.3px;top:806.95px;font-size:10px;color:#1a1a1a;">20,50</div>
<div class="t" style="left:2.3px;top:827.25px;font-size:10px;color:#1a1a1a;">@-40,20</div>
<div style="position:absolute;left:253px;top:802px;width:1px;height:40px;background:#8a8a8a"></div>
<div style="position:absolute;left:254px;top:802px;width:0.8px;height:40px;background:#f4f4f4"></div>
<div class="t" style="left:256.2px;top:806.95px;font-size:10px;color:#1a1a1a;">53.8516&lt;68°</div>
<div class="t" style="left:256.2px;top:827.25px;font-size:10px;color:#1a1a1a;">@44.7214&lt;153°</div>
<svg style="position:absolute;left:506.5px;top:818.7px;overflow:visible" width="7" height="7" viewBox="0 0 7 7"><circle cx="3.3" cy="3.3" r="3" fill="#c6c6c6"/></svg>
<svg style="position:absolute;left:939.8px;top:818.7px;overflow:visible" width="7" height="7" viewBox="0 0 7 7"><circle cx="3.3" cy="3.3" r="3" fill="#c6c6c6"/></svg>
<svg style="position:absolute;left:1269.2px;top:818.7px;overflow:visible" width="7" height="7" viewBox="0 0 7 7"><circle cx="3.3" cy="3.3" r="3" fill="#c6c6c6"/></svg>
<div class="t" style="left:640.3px;top:816.86px;font-size:10.1px;color:#1a1a1a;">Point suivant</div>
<div class="t" style="left:754.2px;top:816.86px;font-size:10.1px;color:#1a1a1a;">Terminer</div>
<div class="t" style="left:949.2px;top:816.77px;font-size:10.2px;color:#1a1a1a;">Aucune des entités sélectionnées.</div>
<svg style="position:absolute;left:717px;top:805.5px;overflow:visible" width="19" height="31" viewBox="0 0 19 31"><rect x="0.6" y="0.6" width="17.2" height="29.4" rx="8.6" fill="#fff" stroke="#333" stroke-width="1"/><path d="M0.8 13.2 Q9.2 10.5 17.6 13.2" fill="none" stroke="#333" stroke-width="1"/><line x1="9.2" y1="1" x2="9.2" y2="11.8" stroke="#333" stroke-width="0.8"/><rect x="7.6" y="3" width="3.2" height="7" rx="1.6" fill="#fff" stroke="#333" stroke-width="0.8"/></svg>
</body></html>
